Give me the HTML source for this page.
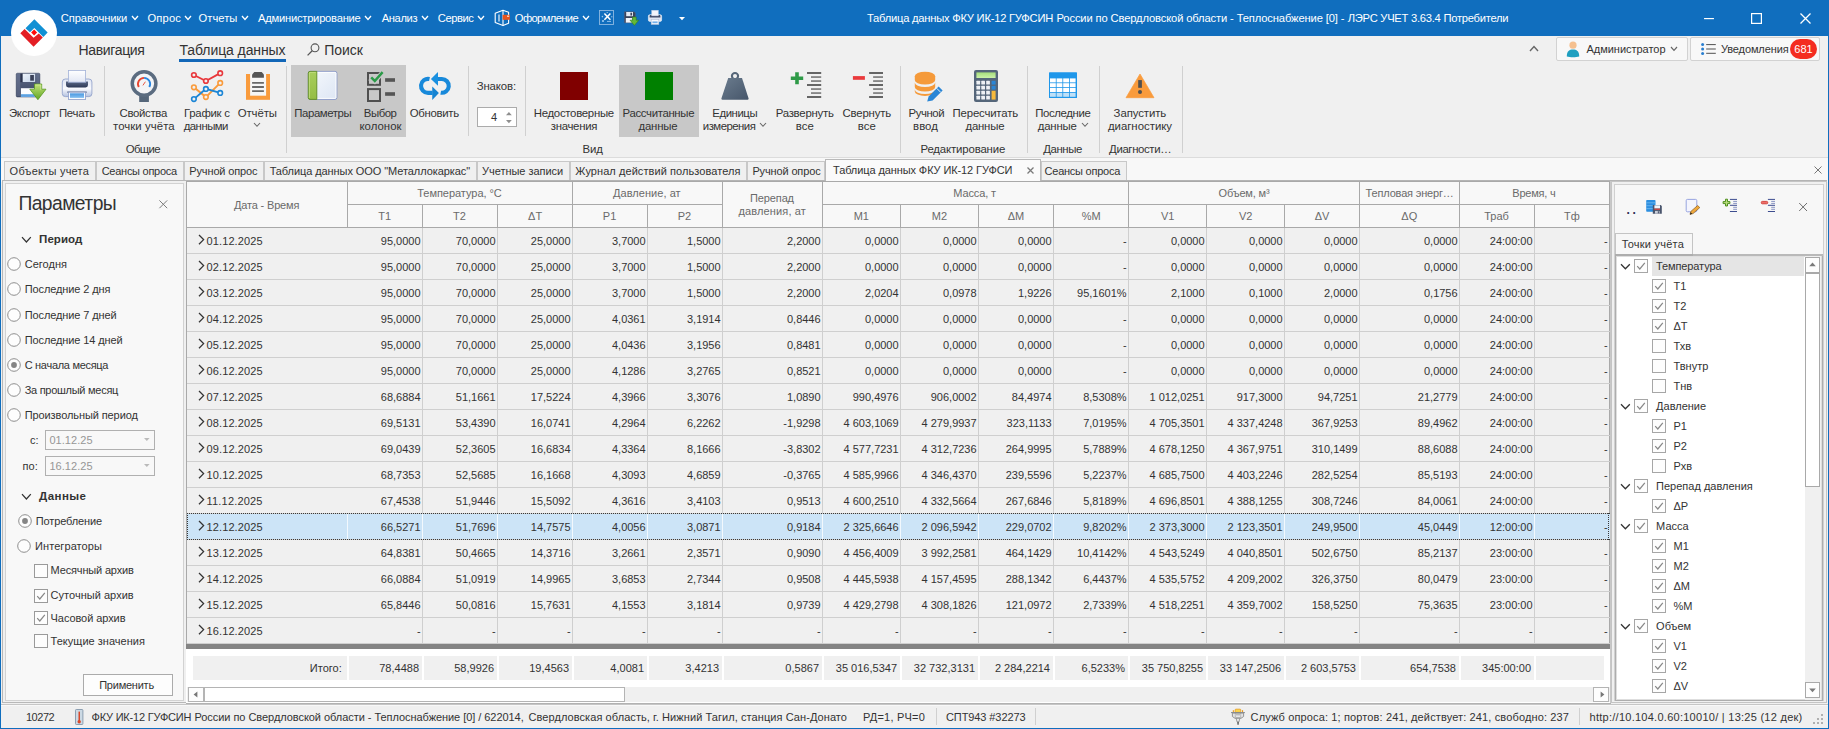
<!DOCTYPE html>
<html lang="ru"><head><meta charset="utf-8"><title>ЛЭРС УЧЕТ</title>
<style>
html,body{margin:0;padding:0;}
body{width:1829px;height:729px;overflow:hidden;position:relative;background:#f0f0f0;
font-family:"Liberation Sans",sans-serif;font-size:11px;color:#333;}
.b{position:absolute;box-sizing:border-box;}
.t{position:absolute;white-space:nowrap;line-height:16px;height:16px;}
svg{overflow:visible;}
</style></head><body>
<div class="b" style="left:0px;top:0px;width:1829px;height:729px;background:#f0f0f0;"></div>
<div class="b" style="left:0px;top:0px;width:1829px;height:36px;background:#106ebe;"></div>
<div class="b" style="left:1px;top:157px;width:1827px;height:25px;background:#f8f8f8;"></div>
<div class="b" style="left:1px;top:157px;width:1827px;height:1px;background:#dcdcdc;"></div>
<svg class="b" style="left:11px;top:10px;" width="46" height="46" viewBox="0 0 46 46"><circle cx="23" cy="23" r="23" fill="#fff"/>
<g transform="translate(23,23)">
<path d="M0.35,-13.7 L13.65,-0.47 L9.35,3.9 L0.35,-5.1 L-4.1,-0.63 L-8.5,-4.8 Z" fill="#1190d4"/>
<path d="M-9.4,-4.0 L-13.7,0.3 L-0.43,13.85 L8.8,4.46 L4.8,0.55 L-0.43,4.85 Z" fill="#e31e24"/>
<path d="M0.12,-3.45 L3.1,-0.47 L0.12,2.5 L-2.86,-0.47 Z" fill="#ff0a0a"/>
</g></svg>
<span class="t" style="left:60.80px;top:10.12px;font-size:11.2px;color:#fff;letter-spacing:-0.123px;">Справочники</span>
<svg class="b" style="left:130.5px;top:14.5px;" width="8" height="5.5" viewBox="0 0 8 5.5"><path d="M1,1 L4.0,4.5 L7,1" fill="none" stroke="#fff" stroke-width="1.3"/></svg>
<span class="t" style="left:147.50px;top:10.12px;font-size:11.2px;color:#fff;letter-spacing:0.133px;">Опрос</span>
<svg class="b" style="left:184px;top:14.5px;" width="8" height="5.5" viewBox="0 0 8 5.5"><path d="M1,1 L4.0,4.5 L7,1" fill="none" stroke="#fff" stroke-width="1.3"/></svg>
<span class="t" style="left:198.50px;top:10.12px;font-size:11.2px;color:#fff;letter-spacing:0.047px;">Отчеты</span>
<svg class="b" style="left:240.5px;top:14.5px;" width="8" height="5.5" viewBox="0 0 8 5.5"><path d="M1,1 L4.0,4.5 L7,1" fill="none" stroke="#fff" stroke-width="1.3"/></svg>
<span class="t" style="left:258.00px;top:10.12px;font-size:11.2px;color:#fff;letter-spacing:-0.242px;">Администрирование</span>
<svg class="b" style="left:364px;top:14.5px;" width="8" height="5.5" viewBox="0 0 8 5.5"><path d="M1,1 L4.0,4.5 L7,1" fill="none" stroke="#fff" stroke-width="1.3"/></svg>
<span class="t" style="left:381.70px;top:10.12px;font-size:11.2px;color:#fff;letter-spacing:-0.386px;">Анализ</span>
<svg class="b" style="left:420.5px;top:14.5px;" width="8" height="5.5" viewBox="0 0 8 5.5"><path d="M1,1 L4.0,4.5 L7,1" fill="none" stroke="#fff" stroke-width="1.3"/></svg>
<span class="t" style="left:437.80px;top:10.12px;font-size:11.2px;color:#fff;letter-spacing:-0.442px;">Сервис</span>
<svg class="b" style="left:476.8px;top:14.5px;" width="8" height="5.5" viewBox="0 0 8 5.5"><path d="M1,1 L4.0,4.5 L7,1" fill="none" stroke="#fff" stroke-width="1.3"/></svg>
<span class="t" style="left:514.80px;top:10.12px;font-size:11.2px;color:#fff;letter-spacing:-0.612px;">Оформление</span>
<svg class="b" style="left:582px;top:14.5px;" width="8" height="5.5" viewBox="0 0 8 5.5"><path d="M1,1 L4.0,4.5 L7,1" fill="none" stroke="#fff" stroke-width="1.3"/></svg>
<span class="t" style="left:867.00px;top:10.12px;font-size:11.2px;color:#fff;letter-spacing:-0.241px;">Таблица данных ФКУ ИК-12 ГУФСИН</span>
<span class="t" style="left:1056.50px;top:10.12px;font-size:11.2px;color:#fff;letter-spacing:-0.136px;">России по Свердловской области - Теплоснабжение [0] -</span>
<span class="t" style="left:1347.70px;top:10.12px;font-size:11.2px;color:#fff;letter-spacing:-0.258px;">ЛЭРС УЧЕТ 3.63.4 Потребители</span>
<svg class="b" style="left:494px;top:9px;" width="17" height="18" viewBox="0 0 17 18"><path d="M1.2,4.2 L9,1.2 L14.6,3.2 L14.6,14.2 L9,16.6 L1.2,13.6 Z" fill="none" stroke="#fff" stroke-width="1.1" stroke-linejoin="round"/>
<path d="M9,1.2 L9,16.6" stroke="#fff" stroke-width="1.1"/>
<path d="M5,5.4 L5,12.4" stroke="#fff" stroke-width="1.1"/>
<rect x="8.6" y="5.8" width="7.3" height="5" fill="#e8541c"/><rect x="13" y="6.6" width="2.2" height="1.2" fill="#ffe3d6"/></svg>
<svg class="b" style="left:599px;top:10px;" width="15" height="15" viewBox="0 0 15 15"><rect x="0.5" y="0.5" width="14" height="14" fill="none" stroke="#8db9e2" stroke-width="0.9"/>
<path d="M5.4,3.4 L11.4,9.8 M11.4,3.4 L5.4,9.8" stroke="#fff" stroke-width="1.5"/>
<circle cx="3.4" cy="6.6" r="0.8" fill="#9ccaf0"/><circle cx="4" cy="11" r="1.1" fill="#9ccaf0"/><path d="M8,11.4 h4" stroke="#9ccaf0" stroke-width="0.9"/><path d="M12.2,6.8 h1.2 M8.2,2 v1" stroke="#cfe3f5" stroke-width="0.8"/></svg>
<svg class="b" style="left:624px;top:11px;" width="16" height="15" viewBox="0 0 16 15"><path d="M0.4,0.8 h9.8 l1.2,1.2 v9.8 h-11 z" fill="#3a445c" stroke="#56627e" stroke-width="0.5"/>
<rect x="2.2" y="1" width="6.8" height="4.2" fill="#e4eaf4"/><rect x="6.4" y="1.7" width="1.7" height="2.8" fill="#3a445c"/>
<rect x="1.8" y="7" width="6.6" height="4.6" fill="#f1f4fa"/>
<path d="M8.6,6 h3.6 v3.2 h2.6 l-4.4,5.2 l-4.4,-5.2 h2.6 z" fill="#64b837" stroke="#2f7d1b" stroke-width="0.6" stroke-linejoin="round"/></svg>
<svg class="b" style="left:648px;top:10px;" width="14" height="15" viewBox="0 0 14 15"><rect x="0.4" y="4.8" width="13.2" height="6.6" rx="1.3" fill="#dfe5f2" stroke="#f4f6fb" stroke-width="0.6"/>
<path d="M1.6,7.4 v-1.4 a1,1 0 0 1 1,-1 h8.8 a1,1 0 0 1 1,1 v1.4 z" fill="#3f4a68"/>
<rect x="3.8" y="0.4" width="6.4" height="5.4" fill="#f3f5fc" stroke="#cfd7ea" stroke-width="0.6"/>
<rect x="3.2" y="9.4" width="7.6" height="5" fill="#f8f9fd" stroke="#b4c0da" stroke-width="0.6"/><rect x="4.4" y="11.4" width="5.2" height="1.8" fill="#74b0ea"/></svg>
<svg class="b" style="left:679px;top:17px;" width="7" height="4" viewBox="0 0 7 4"><path d="M0,0 h6 l-3,3.3 z" fill="#fff"/></svg>
<svg class="b" style="left:1704px;top:17.6px;" width="10" height="1.2" viewBox="0 0 10 1.2"><rect width="10" height="1.2" fill="#fff"/></svg>
<svg class="b" style="left:1751px;top:12.5px;" width="11" height="11" viewBox="0 0 11 11"><rect x="0.6" y="0.6" width="9.8" height="9.8" fill="none" stroke="#fff" stroke-width="1.2"/></svg>
<svg class="b" style="left:1800px;top:12.5px;" width="11" height="11" viewBox="0 0 11 11"><path d="M0.5,0.5 L10.5,10.5 M10.5,0.5 L0.5,10.5" stroke="#fff" stroke-width="1.3"/></svg>
<span class="t" style="left:78.50px;top:42.15px;font-size:14px;color:#333333;letter-spacing:-0.351px;">Навигация</span>
<span class="t" style="left:179.50px;top:42.15px;font-size:14px;color:#333333;letter-spacing:-0.090px;">Таблица данных</span>
<div class="b" style="left:179px;top:59px;width:107px;height:2.6px;background:#1267b8;"></div>
<svg class="b" style="left:306.5px;top:42.5px;" width="13" height="13" viewBox="0 0 13 13"><circle cx="8" cy="4.8" r="3.9" fill="none" stroke="#555" stroke-width="1.1"/><path d="M5.2,7.8 L0.6,12.4" stroke="#555" stroke-width="1.3"/></svg>
<span class="t" style="left:324.20px;top:42.15px;font-size:14px;color:#333333;letter-spacing:-0.019px;">Поиск</span>
<svg class="b" style="left:1529px;top:45px;" width="10" height="7" viewBox="0 0 10 7"><path d="M1,6 L5,1.6 L9,6" fill="none" stroke="#666" stroke-width="1.4"/></svg>
<div class="b" style="left:1556px;top:37px;width:132px;height:24px;background:#f8f8f8;border:1px solid #d2d2d2;border-radius:2px;"></div>
<svg class="b" style="left:1566px;top:41px;" width="14" height="16" viewBox="0 0 14 16"><circle cx="7" cy="4.2" r="3.6" fill="#f5c08f"/><path d="M0.8,15.5 C0.8,10 3.5,8.6 7,8.6 C10.5,8.6 13.2,10 13.2,15.5 C10,16.6 4,16.6 0.8,15.5 Z" fill="#1e9fc0"/></svg>
<span class="t" style="left:1586.50px;top:41.19px;font-size:11px;color:#333333;letter-spacing:-0.028px;">Администратор</span>
<svg class="b" style="left:1669.5px;top:46px;" width="8" height="5.3" viewBox="0 0 8 5.3"><path d="M1,1 L4.0,4.3 L7,1" fill="none" stroke="#666" stroke-width="1.2"/></svg>
<div class="b" style="left:1690px;top:37px;width:130px;height:24px;background:#f8f8f8;border:1px solid #d2d2d2;border-radius:2px;"></div>
<svg class="b" style="left:1700.5px;top:43px;" width="16" height="12" viewBox="0 0 16 12"><circle cx="1.6" cy="1.6" r="1.5" fill="#2a7fd0"/><circle cx="1.6" cy="6" r="1.5" fill="#2a7fd0"/><circle cx="1.6" cy="10.4" r="1.5" fill="#2a7fd0"/>
<path d="M5.2,1.6 h9.6 M5.2,6 h9.6 M5.2,10.3 h9.6" stroke="#505050" stroke-width="1"/></svg>
<span class="t" style="left:1721.00px;top:41.19px;font-size:11px;color:#333333;letter-spacing:-0.116px;">Уведомления</span>
<div class="b" style="left:1790px;top:39px;width:27px;height:20.4px;background:#f42c20;border-radius:10.2px;"></div>
<span class="t" style="left:1794.32px;top:41.19px;font-size:11px;color:#fff;">681</span>
<div class="b" style="left:104px;top:66px;width:1px;height:70px;background:#d0d0d0;"></div>
<div class="b" style="left:286px;top:66px;width:1px;height:87px;background:#d0d0d0;"></div>
<div class="b" style="left:468px;top:66px;width:1px;height:70px;background:#d0d0d0;"></div>
<div class="b" style="left:525px;top:66px;width:1px;height:70px;background:#d0d0d0;"></div>
<div class="b" style="left:900px;top:66px;width:1px;height:87px;background:#d0d0d0;"></div>
<div class="b" style="left:1027px;top:66px;width:1px;height:87px;background:#d0d0d0;"></div>
<div class="b" style="left:1099px;top:66px;width:1px;height:87px;background:#d0d0d0;"></div>
<div class="b" style="left:1182px;top:66px;width:1px;height:87px;background:#d0d0d0;"></div>
<div class="b" style="left:291px;top:65px;width:115px;height:72px;background:#c8c8c8;"></div>
<div class="b" style="left:619px;top:65px;width:80px;height:72px;background:#c8c8c8;"></div>
<span class="t" style="left:8.90px;top:105.05px;font-size:11.4px;color:#333333;letter-spacing:-0.248px;">Экспорт</span>
<span class="t" style="left:58.90px;top:105.05px;font-size:11.4px;color:#333333;letter-spacing:-0.208px;">Печать</span>
<span class="t" style="left:119.50px;top:105.05px;font-size:11.4px;color:#333333;letter-spacing:-0.320px;">Свойства</span>
<span class="t" style="left:113.00px;top:117.85px;font-size:11.4px;color:#333333;letter-spacing:0.067px;">точки учёта</span>
<span class="t" style="left:184.00px;top:105.05px;font-size:11.4px;color:#333333;letter-spacing:-0.265px;">График с</span>
<span class="t" style="left:183.70px;top:117.85px;font-size:11.4px;color:#333333;letter-spacing:-0.526px;">данными</span>
<span class="t" style="left:237.70px;top:105.05px;font-size:11.4px;color:#333333;letter-spacing:-0.081px;">Отчёты</span>
<svg class="b" style="left:253px;top:121.6px;" width="8" height="5.3" viewBox="0 0 8 5.3"><path d="M1,1 L4.0,4.3 L7,1" fill="none" stroke="#666" stroke-width="1.1"/></svg>
<span class="t" style="left:125.70px;top:140.85px;font-size:11.4px;color:#333333;letter-spacing:-0.637px;">Общие</span>
<span class="t" style="left:294.30px;top:105.05px;font-size:11.4px;color:#333333;letter-spacing:-0.419px;">Параметры</span>
<span class="t" style="left:363.80px;top:105.05px;font-size:11.4px;color:#333333;letter-spacing:-0.462px;">Выбор</span>
<span class="t" style="left:359.40px;top:117.85px;font-size:11.4px;color:#333333;letter-spacing:0.036px;">колонок</span>
<span class="t" style="left:409.70px;top:105.05px;font-size:11.4px;color:#333333;letter-spacing:-0.302px;">Обновить</span>
<span class="t" style="left:476.70px;top:78.05px;font-size:11.4px;color:#333333;letter-spacing:-0.129px;">Знаков:</span>
<div class="b" style="left:477px;top:107px;width:40px;height:20px;background:#fff;border:1px solid #ababab;"></div>
<span class="t" style="left:491.00px;top:108.89px;font-size:11px;color:#333333;">4</span>
<svg class="b" style="left:505.8px;top:111.6px;" width="6" height="4" viewBox="0 0 6 4"><path d="M0,3.2 L2.9,0 L5.8,3.2 Z" fill="#8e8e8e"/></svg>
<svg class="b" style="left:505.8px;top:119.6px;" width="6" height="4" viewBox="0 0 6 4"><path d="M0,0 L2.9,3.2 L5.8,0 Z" fill="#8e8e8e"/></svg>
<span class="t" style="left:533.70px;top:105.05px;font-size:11.4px;color:#333333;letter-spacing:-0.276px;">Недостоверные</span>
<span class="t" style="left:550.70px;top:117.85px;font-size:11.4px;color:#333333;letter-spacing:-0.279px;">значения</span>
<span class="t" style="left:622.60px;top:105.05px;font-size:11.4px;color:#333333;letter-spacing:-0.342px;">Рассчитанные</span>
<span class="t" style="left:638.60px;top:117.85px;font-size:11.4px;color:#333333;letter-spacing:-0.236px;">данные</span>
<span class="t" style="left:712.30px;top:105.05px;font-size:11.4px;color:#333333;letter-spacing:-0.444px;">Единицы</span>
<span class="t" style="left:702.80px;top:117.85px;font-size:11.4px;color:#333333;letter-spacing:-0.521px;">измерения</span>
<svg class="b" style="left:759px;top:121.6px;" width="8" height="5.3" viewBox="0 0 8 5.3"><path d="M1,1 L4.0,4.3 L7,1" fill="none" stroke="#666" stroke-width="1.1"/></svg>
<span class="t" style="left:775.70px;top:105.05px;font-size:11.4px;color:#333333;letter-spacing:-0.243px;">Развернуть</span>
<span class="t" style="left:795.87px;top:117.85px;font-size:11.4px;color:#333333;">все</span>
<span class="t" style="left:842.60px;top:105.05px;font-size:11.4px;color:#333333;letter-spacing:-0.200px;">Свернуть</span>
<span class="t" style="left:857.82px;top:117.85px;font-size:11.4px;color:#333333;">все</span>
<span class="t" style="left:582.39px;top:140.85px;font-size:11.4px;color:#333333;">Вид</span>
<span class="t" style="left:908.60px;top:105.05px;font-size:11.4px;color:#333333;letter-spacing:-0.441px;">Ручной</span>
<span class="t" style="left:913.09px;top:117.85px;font-size:11.4px;color:#333333;">ввод</span>
<span class="t" style="left:952.60px;top:105.05px;font-size:11.4px;color:#333333;letter-spacing:-0.186px;">Пересчитать</span>
<span class="t" style="left:965.50px;top:117.85px;font-size:11.4px;color:#333333;letter-spacing:-0.220px;">данные</span>
<span class="t" style="left:920.50px;top:140.85px;font-size:11.4px;color:#333333;letter-spacing:-0.153px;">Редактирование</span>
<span class="t" style="left:1035.30px;top:105.05px;font-size:11.4px;color:#333333;letter-spacing:-0.393px;">Последние</span>
<span class="t" style="left:1037.80px;top:117.85px;font-size:11.4px;color:#333333;letter-spacing:-0.203px;">данные</span>
<svg class="b" style="left:1080.5px;top:121.6px;" width="8" height="5.3" viewBox="0 0 8 5.3"><path d="M1,1 L4.0,4.3 L7,1" fill="none" stroke="#666" stroke-width="1.1"/></svg>
<span class="t" style="left:1043.20px;top:140.85px;font-size:11.4px;color:#333333;letter-spacing:-0.398px;">Данные</span>
<span class="t" style="left:1113.60px;top:105.05px;font-size:11.4px;color:#333333;letter-spacing:-0.091px;">Запустить</span>
<span class="t" style="left:1107.90px;top:117.85px;font-size:11.4px;color:#333333;letter-spacing:-0.006px;">диагностику</span>
<span class="t" style="left:1109.10px;top:140.85px;font-size:11.4px;color:#333333;letter-spacing:-0.381px;">Диагности…</span>
<div class="b" style="left:560px;top:72px;width:28px;height:28px;background:#800000;"></div>
<div class="b" style="left:645px;top:72px;width:28px;height:28px;background:#008000;"></div>
<svg class="b" style="left:0;top:0" width="1829" height="160" viewBox="0 0 1829 160"><defs>
<linearGradient id="gNavy" x1="0" y1="0" x2="0" y2="1"><stop offset="0" stop-color="#5c6a88"/><stop offset="1" stop-color="#2e3956"/></linearGradient>
<linearGradient id="gGreen" x1="0" y1="0" x2="0" y2="1"><stop offset="0" stop-color="#c2e276"/><stop offset="1" stop-color="#62a626"/></linearGradient>
<linearGradient id="gPrn" x1="0" y1="0" x2="0" y2="1"><stop offset="0" stop-color="#dfe5f3"/><stop offset="0.55" stop-color="#f8f9fd"/><stop offset="1" stop-color="#b4c2e0"/></linearGradient>
<linearGradient id="gSlate" x1="0" y1="0" x2="1" y2="1"><stop offset="0" stop-color="#6b7c8e"/><stop offset="1" stop-color="#46566a"/></linearGradient>
<linearGradient id="gPar" x1="0" y1="0" x2="1" y2="1"><stop offset="0" stop-color="#f6f9fd"/><stop offset="1" stop-color="#dde6f4"/></linearGradient>
<linearGradient id="gParG" x1="0" y1="0" x2="0" y2="1"><stop offset="0" stop-color="#a8ce5c"/><stop offset="1" stop-color="#94bd44"/></linearGradient>
<linearGradient id="gScr" x1="0" y1="0" x2="0" y2="1"><stop offset="0" stop-color="#a6de7c"/><stop offset="1" stop-color="#caf2a8"/></linearGradient>
<linearGradient id="gFl" x1="0" y1="0" x2="0" y2="1"><stop offset="0" stop-color="#5d6985"/><stop offset="1" stop-color="#3a4561"/></linearGradient>
<linearGradient id="gShut" x1="0" y1="0" x2="1" y2="1"><stop offset="0" stop-color="#eef4fb"/><stop offset="1" stop-color="#c3d2e6"/></linearGradient>
<linearGradient id="gBlu" x1="0" y1="0" x2="0" y2="1"><stop offset="0" stop-color="#86beee"/><stop offset="1" stop-color="#3a88d6"/></linearGradient>
<linearGradient id="gBlu2" x1="0" y1="0" x2="0" y2="1"><stop offset="0" stop-color="#4a98e0"/><stop offset="1" stop-color="#86c0f0"/></linearGradient>
<linearGradient id="gPap" x1="0" y1="0" x2="0" y2="1"><stop offset="0" stop-color="#ffffff"/><stop offset="1" stop-color="#e2e7f4"/></linearGradient>
</defs><g>
<rect x="16.2" y="73.2" width="23.7" height="23.8" rx="1.2" fill="url(#gFl)" stroke="#39425c" stroke-width="0.5"/>
<rect x="16.8" y="73.8" width="3.4" height="22.6" fill="#6b7794" opacity="0.55"/><rect x="36.4" y="73.8" width="3" height="12" fill="#6b7794" opacity="0.45"/>
<rect x="20.4" y="73.6" width="2.4" height="8.6" fill="#2b334c"/>
<rect x="22.7" y="73.8" width="12.4" height="8.2" fill="url(#gShut)"/><rect x="30.2" y="75" width="3.7" height="5.7" fill="#3a4158"/>
<rect x="20.9" y="88.2" width="13.9" height="8.8" fill="#fbfcff"/><rect x="20.9" y="94" width="13.9" height="2.8" fill="url(#gBlu)"/>
<path d="M34.5,84 h7.2 v5.2 h4.3 l-8.1,10.5 l-8.1,-10.5 h4.7 z" fill="url(#gGreen)" stroke="#5a9a22" stroke-width="0.8" stroke-linejoin="round"/>
<path d="M35.4,84.9 h5.4 v5.2" fill="none" stroke="#e2f3b4" stroke-width="0.7" opacity="0.8"/>
</g><g>
<rect x="62.3" y="79" width="29.6" height="17.6" rx="3" fill="url(#gPrn)" stroke="#8a9cc8" stroke-width="0.8"/>
<path d="M66,81.4 h22 v3.6 a2.4,2.4 0 0 1 -2.4,2.4 h-17.2 a2.4,2.4 0 0 1 -2.4,-2.4 z" fill="url(#gNavy)"/>
<rect x="68.4" y="70.4" width="17.2" height="11.8" fill="url(#gPap)" stroke="#a3b2d8" stroke-width="0.8"/>
<rect x="67.2" y="91.6" width="19.6" height="1" fill="#4a5878"/>
<rect x="68.4" y="92.2" width="17.2" height="7.3" fill="#fbfcff" stroke="#8a9cc8" stroke-width="0.8"/>
<rect x="70" y="93.3" width="14" height="4.6" fill="url(#gBlu2)"/>
</g><g>
<rect x="139.2" y="95" width="9.7" height="7" fill="#55667a"/>
<circle cx="144.06" cy="83.5" r="11.8" fill="#f3f4f6" stroke="#5b6c80" stroke-width="3.5"/>
<path d="M138.82,86.93 A6.05,6.05 0 0 1 144.06,77.85" fill="none" stroke="#e8452f" stroke-width="1.9"/>
<path d="M144.06,77.85 A6.05,6.05 0 0 1 149.3,86.93" fill="none" stroke="#2a86e0" stroke-width="1.9"/>
<path d="M142.9,85.4 L145.4,81.7" stroke="#e8452f" stroke-width="0.9"/>
</g><path d="M193.9,75 L205.9,81 L220.2,73.2" fill="none" stroke="#e8383c" stroke-width="1.9"/><circle cx="193.9" cy="75" r="2.3" fill="#f0f0f0" stroke="#e8383c" stroke-width="1.6"/><circle cx="205.9" cy="81" r="2.3" fill="#f0f0f0" stroke="#e8383c" stroke-width="1.6"/><circle cx="220.2" cy="73.2" r="2.3" fill="#f0f0f0" stroke="#e8383c" stroke-width="1.6"/><path d="M193.9,87.3 L205.9,97.1 L220.2,82.9" fill="none" stroke="#f99b3c" stroke-width="1.9"/><circle cx="193.9" cy="87.3" r="2.3" fill="#f0f0f0" stroke="#f99b3c" stroke-width="1.6"/><circle cx="205.9" cy="97.1" r="2.3" fill="#f0f0f0" stroke="#f99b3c" stroke-width="1.6"/><circle cx="220.2" cy="82.9" r="2.3" fill="#f0f0f0" stroke="#f99b3c" stroke-width="1.6"/><path d="M193.9,99.1 L205.9,88.9 L220.2,92.9" fill="none" stroke="#1c86d6" stroke-width="1.9"/><circle cx="193.9" cy="99.1" r="2.3" fill="#f0f0f0" stroke="#1c86d6" stroke-width="1.6"/><circle cx="205.9" cy="88.9" r="2.3" fill="#f0f0f0" stroke="#1c86d6" stroke-width="1.6"/><circle cx="220.2" cy="92.9" r="2.3" fill="#f0f0f0" stroke="#1c86d6" stroke-width="1.6"/><g>
<rect x="246" y="74" width="24" height="25.8" fill="#f99b3c"/>
<rect x="250.1" y="74" width="16" height="21.7" fill="#f6f6f6"/>
<path d="M252.1,77.8 v-3.4 l2.2,-2.3 h7.4 l2.2,2.3 v3.4 z" fill="#555"/>
<path d="M252.1,82.9 h11.8 M252.1,87 h11.8 M252.1,91.1 h11.8" stroke="#6a6a6a" stroke-width="1.8"/>
</g><g>
<rect x="308.3" y="71.4" width="28.6" height="28" rx="1.8" fill="url(#gPar)" stroke="#8595c6" stroke-width="0.9"/>
<rect x="309.3" y="72.4" width="26.6" height="26" rx="1" fill="none" stroke="#ffffff" stroke-width="0.9"/>
<path d="M310,71.4 h6.8 v28 h-6.8 a1.7,1.7 0 0 1 -1.7,-1.7 v-24.6 a1.7,1.7 0 0 1 1.7,-1.7 z" fill="url(#gParG)" stroke="#5f8a22" stroke-width="0.9"/>
<path d="M309.4,98 v-25 a0.6,0.6 0 0 1 0.6,-0.6 h5.8" fill="none" stroke="#c4e084" stroke-width="0.8"/>
</g><g fill="none" stroke="#4f4f4f" stroke-width="2">
<rect x="368" y="73" width="12" height="11.8"/><rect x="368" y="89.1" width="12" height="11.9"/>
</g>
<rect x="385.1" y="78.2" width="9.9" height="3.6" fill="#555"/><rect x="385.1" y="92.2" width="9.9" height="3.6" fill="#555"/>
<path d="M369.6,78.2 L374.6,81.4 L383.4,71.4" fill="none" stroke="#c8c8c8" stroke-width="4.6"/>
<path d="M371.2,77.4 L374.8,81 L382.6,72.2" fill="none" stroke="#2a9a47" stroke-width="2.5"/><g fill="none" stroke="#1889da" stroke-width="4.1">
<path d="M429.5,79 A7,7 0 1 0 428.06,92.84 L432.6,92.84"/>
<path d="M437.7,79 L441.9,79 A6.9,6.9 0 1 1 440.7,92.7"/>
</g>
<path d="M432.27,86.4 L438.9,93.1 L432.27,100 Z" fill="#1684d2"/>
<path d="M437.98,72 L430.9,78.9 L437.98,85.84 Z" fill="#1a90e0"/><g>
<circle cx="735" cy="76.1" r="3.1" fill="none" stroke="#566678" stroke-width="2.1"/>
<path d="M728.2,78 h13.8 l6.6,20.6 q0.3,1.1 -0.9,1.1 h-25.4 q-1.2,0 -0.9,-1.1 z" fill="url(#gSlate)"/>
</g><rect x="807" y="72.2" width="14.200000000000045" height="1.6" fill="#444"/><rect x="811" y="76.3" width="10.200000000000045" height="1.5" fill="#6e6e6e"/><rect x="811" y="80.3" width="10.200000000000045" height="1.5" fill="#6e6e6e"/><rect x="807" y="84.2" width="14.200000000000045" height="1.6" fill="#444"/><rect x="811" y="88.3" width="10.200000000000045" height="1.5" fill="#6e6e6e"/><rect x="811" y="92.3" width="10.200000000000045" height="1.5" fill="#6e6e6e"/><rect x="807" y="96.2" width="14.200000000000045" height="1.6" fill="#444"/><path d="M795.2,72.2 h3.6 v4.2 h4.4 v3.6 h-4.4 v4.2 h-3.6 v-4.2 h-4.4 v-3.6 h4.4 z" fill="#2e9a47"/><rect x="869.1" y="72.2" width="13.899999999999977" height="1.6" fill="#444"/><rect x="873.1" y="76.3" width="9.899999999999977" height="1.5" fill="#6e6e6e"/><rect x="873.1" y="80.3" width="9.899999999999977" height="1.5" fill="#6e6e6e"/><rect x="869.1" y="84.2" width="13.899999999999977" height="1.6" fill="#444"/><rect x="873.1" y="88.3" width="9.899999999999977" height="1.5" fill="#6e6e6e"/><rect x="873.1" y="92.3" width="9.899999999999977" height="1.5" fill="#6e6e6e"/><rect x="869.1" y="96.2" width="13.899999999999977" height="1.6" fill="#444"/><rect x="852.9" y="76.1" width="12" height="3.7" fill="#ea3a3c"/><g fill="#f59a3a">
<path d="M914.8,76.2 a10.2,4.5 0 0 1 20.4,0 v3.8 a10.2,4.5 0 0 1 -20.4,0 z"/>
<path d="M914.8,82.6 a10.2,4.5 0 0 0 20.4,0 v4.4 a10.2,4.5 0 0 1 -20.4,0 z"/>
<path d="M914.8,89.6 a10.2,4.5 0 0 0 20.4,0 v1.8 a10.2,4.5 0 0 1 -20.4,0 z"/>
</g>
<path d="M927.2,101.6 L928.6,96.4 L938.6,86.4 L942.6,90.4 L932.6,100.4 Z" fill="#2a86d6"/>
<path d="M936.7,88.3 L940.7,92.3" stroke="#f0f0f0" stroke-width="1"/><rect x="974" y="70" width="24" height="32" rx="2" fill="#55667a"/><rect x="976.4" y="72.4" width="19.2" height="5.6" fill="url(#gScr)"/><rect x="976.4" y="80.8" width="3.7" height="3.8" rx="0.5" fill="#eef1f5"/><rect x="981.3" y="80.8" width="3.7" height="3.8" rx="0.5" fill="#eef1f5"/><rect x="986.2" y="80.8" width="3.7" height="3.8" rx="0.5" fill="#eef1f5"/><rect x="976.4" y="85.8" width="3.7" height="3.8" rx="0.5" fill="#eef1f5"/><rect x="981.3" y="85.8" width="3.7" height="3.8" rx="0.5" fill="#eef1f5"/><rect x="986.2" y="85.8" width="3.7" height="3.8" rx="0.5" fill="#eef1f5"/><rect x="976.4" y="90.8" width="3.7" height="3.8" rx="0.5" fill="#eef1f5"/><rect x="981.3" y="90.8" width="3.7" height="3.8" rx="0.5" fill="#eef1f5"/><rect x="986.2" y="90.8" width="3.7" height="3.8" rx="0.5" fill="#eef1f5"/><rect x="976.4" y="95.8" width="3.7" height="3.8" rx="0.5" fill="#eef1f5"/><rect x="981.3" y="95.8" width="3.7" height="3.8" rx="0.5" fill="#eef1f5"/><rect x="986.2" y="95.8" width="3.7" height="3.8" rx="0.5" fill="#eef1f5"/><rect x="991.6" y="80.8" width="4" height="3.8" fill="#2a86d6"/><rect x="991.6" y="85.8" width="4" height="3.8" fill="#2a86d6"/><rect x="991.6" y="90.8" width="4" height="8.8" fill="#f6b93b"/><rect x="1049" y="72.2" width="28" height="25.8" rx="0.6" fill="#1f97ea"/><rect x="1050.0" y="78.4" width="5.8" height="4" fill="#ffffff"/><rect x="1056.6" y="78.4" width="5.8" height="4" fill="#ffffff"/><rect x="1063.2" y="78.4" width="5.8" height="4" fill="#ffffff"/><rect x="1069.8" y="78.4" width="5.8" height="4" fill="#ffffff"/><rect x="1050.0" y="83.2" width="5.8" height="4" fill="#ffffff"/><rect x="1056.6" y="83.2" width="5.8" height="4" fill="#ffffff"/><rect x="1063.2" y="83.2" width="5.8" height="4" fill="#ffffff"/><rect x="1069.8" y="83.2" width="5.8" height="4" fill="#ffffff"/><rect x="1050.0" y="88.0" width="5.8" height="4" fill="#ffffff"/><rect x="1056.6" y="88.0" width="5.8" height="4" fill="#ffffff"/><rect x="1063.2" y="88.0" width="5.8" height="4" fill="#ffffff"/><rect x="1069.8" y="88.0" width="5.8" height="4" fill="#ffffff"/><rect x="1050.0" y="92.8" width="5.8" height="4" fill="#bfe0f7"/><rect x="1056.6" y="92.8" width="5.8" height="4" fill="#bfe0f7"/><rect x="1063.2" y="92.8" width="5.8" height="4" fill="#bfe0f7"/><rect x="1069.8" y="92.8" width="5.8" height="4" fill="#bfe0f7"/><path d="M1140,74 L1154,97.7 L1126,97.7 Z" fill="#f99b3c" stroke="#f99b3c" stroke-width="0.7" stroke-linejoin="round"/>
<rect x="1138.2" y="80.1" width="3.7" height="7.7" fill="#505050"/><circle cx="1140" cy="92.1" r="2" fill="#505050"/></svg>
<div class="b" style="left:4px;top:161px;width:92px;height:20px;background:#f0f0f0;border:1px solid #c8c8c8;border-bottom:none;"></div>
<span class="t" style="left:9.60px;top:163.19px;font-size:11px;color:#333333;letter-spacing:0.236px;">Объекты учета</span>
<div class="b" style="left:96px;top:161px;width:88px;height:20px;background:#f0f0f0;border:1px solid #c8c8c8;border-bottom:none;"></div>
<span class="t" style="left:101.70px;top:163.19px;font-size:11px;color:#333333;letter-spacing:-0.265px;">Сеансы опроса</span>
<div class="b" style="left:184px;top:161px;width:80px;height:20px;background:#f0f0f0;border:1px solid #c8c8c8;border-bottom:none;"></div>
<span class="t" style="left:189.30px;top:163.19px;font-size:11px;color:#333333;letter-spacing:-0.139px;">Ручной опрос</span>
<div class="b" style="left:264px;top:161px;width:213px;height:20px;background:#f0f0f0;border:1px solid #c8c8c8;border-bottom:none;"></div>
<span class="t" style="left:269.70px;top:163.19px;font-size:11px;color:#333333;letter-spacing:-0.079px;">Таблица данных ООО &quot;Металлокаркас&quot;</span>
<div class="b" style="left:477px;top:161px;width:93px;height:20px;background:#f0f0f0;border:1px solid #c8c8c8;border-bottom:none;"></div>
<span class="t" style="left:482.00px;top:163.19px;font-size:11px;color:#333333;letter-spacing:-0.026px;">Учетные записи</span>
<div class="b" style="left:570px;top:161px;width:177px;height:20px;background:#f0f0f0;border:1px solid #c8c8c8;border-bottom:none;"></div>
<span class="t" style="left:575.30px;top:163.19px;font-size:11px;color:#333333;letter-spacing:0.069px;">Журнал действий пользователя</span>
<div class="b" style="left:747px;top:161px;width:78px;height:20px;background:#f0f0f0;border:1px solid #c8c8c8;border-bottom:none;"></div>
<span class="t" style="left:752.40px;top:163.19px;font-size:11px;color:#333333;letter-spacing:-0.139px;">Ручной опрос</span>
<div class="b" style="left:1041px;top:161px;width:86px;height:20px;background:#f0f0f0;border:1px solid #c8c8c8;border-bottom:none;"></div>
<span class="t" style="left:1044.60px;top:163.19px;font-size:11px;color:#333333;letter-spacing:-0.249px;">Сеансы опроса</span>
<div class="b" style="left:2px;top:180px;width:1825px;height:1px;background:#b4b4b4;"></div>
<div class="b" style="left:825px;top:159px;width:216px;height:22px;background:#fafafa;border:1px solid #b9b9b9;border-bottom:none;"></div>
<span class="t" style="left:833.00px;top:162.19px;font-size:11px;color:#333333;letter-spacing:-0.098px;">Таблица данных ФКУ ИК-12 ГУФСИ</span>
<svg class="b" style="left:1026.5px;top:167px;" width="7" height="7" viewBox="0 0 7 7"><path d="M0.5,0.5 L6.5,6.5 M6.5,0.5 L0.5,6.5" stroke="#7a7a7a" stroke-width="1.25"/></svg>
<svg class="b" style="left:1813.5px;top:165.5px;" width="8" height="8" viewBox="0 0 8 8"><path d="M0.5,0.5 L7.5,7.5 M7.5,0.5 L0.5,7.5" stroke="#777" stroke-width="1"/></svg>
<div class="b" style="left:2px;top:180px;width:185px;height:523px;background:#f0f0f0;border:1px solid #b8b8b8;"></div>
<div class="b" style="left:5px;top:183px;width:179px;height:518px;background:#f8f8f8;border:1px solid #d2d2d2;"></div>
<span class="t" style="left:18.40px;top:196.31px;font-size:19.3px;color:#333333;letter-spacing:-0.565px;">Параметры</span>
<svg class="b" style="left:158.8px;top:199.8px;" width="9" height="9" viewBox="0 0 9 9"><path d="M0.4,0.4 L8.2,8.2 M8.2,0.4 L0.4,8.2" stroke="#7c7c7c" stroke-width="1"/></svg>
<svg class="b" style="left:21px;top:235.5px;" width="11" height="8" viewBox="0 0 11 8"><path d="M1,1.2 L5.4,6 L9.8,1.2" fill="none" stroke="#333" stroke-width="1.25"/></svg>
<span class="t" style="left:39.10px;top:230.72px;font-size:11.5px;color:#333333;letter-spacing:0.045px;font-weight:bold;">Период</span>
<svg class="b" style="left:7px;top:257.0px;" width="14" height="14" viewBox="0 0 14 14"><circle cx="7" cy="7" r="6.3" fill="#fdfdfd" stroke="#8f8f8f" stroke-width="1"/></svg>
<span class="t" style="left:24.70px;top:255.79px;font-size:11px;color:#333333;letter-spacing:0.035px;">Сегодня</span>
<svg class="b" style="left:7px;top:282.0px;" width="14" height="14" viewBox="0 0 14 14"><circle cx="7" cy="7" r="6.3" fill="#fdfdfd" stroke="#8f8f8f" stroke-width="1"/></svg>
<span class="t" style="left:24.70px;top:280.79px;font-size:11px;color:#333333;letter-spacing:-0.110px;">Последние 2 дня</span>
<svg class="b" style="left:7px;top:308.1px;" width="14" height="14" viewBox="0 0 14 14"><circle cx="7" cy="7" r="6.3" fill="#fdfdfd" stroke="#8f8f8f" stroke-width="1"/></svg>
<span class="t" style="left:24.70px;top:306.69px;font-size:11px;color:#333333;letter-spacing:-0.110px;">Последние 7 дней</span>
<svg class="b" style="left:7px;top:333.0px;" width="14" height="14" viewBox="0 0 14 14"><circle cx="7" cy="7" r="6.3" fill="#fdfdfd" stroke="#8f8f8f" stroke-width="1"/></svg>
<span class="t" style="left:24.70px;top:331.89px;font-size:11px;color:#333333;letter-spacing:-0.105px;">Последние 14 дней</span>
<svg class="b" style="left:7px;top:358.2px;" width="14" height="14" viewBox="0 0 14 14"><circle cx="7" cy="7" r="6.3" fill="#fdfdfd" stroke="#8f8f8f" stroke-width="1"/><circle cx="7" cy="7" r="2.9" fill="#858585"/></svg>
<span class="t" style="left:24.70px;top:356.79px;font-size:11px;color:#333333;letter-spacing:-0.296px;">С начала месяца</span>
<svg class="b" style="left:7px;top:383.0px;" width="14" height="14" viewBox="0 0 14 14"><circle cx="7" cy="7" r="6.3" fill="#fdfdfd" stroke="#8f8f8f" stroke-width="1"/></svg>
<span class="t" style="left:24.70px;top:381.69px;font-size:11px;color:#333333;letter-spacing:-0.275px;">За прошлый месяц</span>
<svg class="b" style="left:7px;top:407.9px;" width="14" height="14" viewBox="0 0 14 14"><circle cx="7" cy="7" r="6.3" fill="#fdfdfd" stroke="#8f8f8f" stroke-width="1"/></svg>
<span class="t" style="left:24.70px;top:406.89px;font-size:11px;color:#333333;letter-spacing:-0.094px;">Произвольный период</span>
<span class="t" style="left:30.00px;top:431.79px;font-size:11px;color:#333333;">с:</span>
<div class="b" style="left:45px;top:430px;width:110px;height:20px;background:#f8f8f8;border:1px solid #b0b0b0;"></div>
<span class="t" style="left:49.40px;top:431.79px;font-size:11px;color:#969696;letter-spacing:0.048px;">01.12.25</span>
<svg class="b" style="left:144px;top:438.4px;" width="6" height="4" viewBox="0 0 6 4"><path d="M0,0 h5.6 l-2.8,3 z" fill="#bababa"/></svg>
<span class="t" style="left:22.60px;top:457.79px;font-size:11px;color:#333333;">по:</span>
<div class="b" style="left:45px;top:456px;width:110px;height:20px;background:#f8f8f8;border:1px solid #b0b0b0;"></div>
<span class="t" style="left:49.40px;top:457.79px;font-size:11px;color:#969696;letter-spacing:0.048px;">16.12.25</span>
<svg class="b" style="left:144px;top:464.4px;" width="6" height="4" viewBox="0 0 6 4"><path d="M0,0 h5.6 l-2.8,3 z" fill="#bababa"/></svg>
<svg class="b" style="left:21px;top:492.5px;" width="11" height="8" viewBox="0 0 11 8"><path d="M1,1.2 L5.4,6 L9.8,1.2" fill="none" stroke="#333" stroke-width="1.25"/></svg>
<span class="t" style="left:39.10px;top:487.82px;font-size:11.5px;color:#333333;letter-spacing:0.434px;font-weight:bold;">Данные</span>
<svg class="b" style="left:18px;top:513.9px;" width="14" height="14" viewBox="0 0 14 14"><circle cx="7" cy="7" r="6.3" fill="#fdfdfd" stroke="#8f8f8f" stroke-width="1"/><circle cx="7" cy="7" r="2.9" fill="#858585"/></svg>
<span class="t" style="left:35.80px;top:513.19px;font-size:11px;color:#333333;letter-spacing:-0.128px;">Потребление</span>
<svg class="b" style="left:17px;top:538.6999999999999px;" width="14" height="14" viewBox="0 0 14 14"><circle cx="7" cy="7" r="6.3" fill="#fdfdfd" stroke="#8f8f8f" stroke-width="1"/></svg>
<span class="t" style="left:35.00px;top:537.99px;font-size:11px;color:#333333;letter-spacing:0.084px;">Интеграторы</span>
<svg class="b" style="left:34px;top:563.5px;" width="14" height="14" viewBox="0 0 14 14"><rect x="0.5" y="0.5" width="13" height="13" fill="#fdfdfd" stroke="#9a9a9a" stroke-width="1"/></svg>
<span class="t" style="left:50.60px;top:562.49px;font-size:11px;color:#333333;letter-spacing:-0.162px;">Месячный архив</span>
<svg class="b" style="left:34px;top:588.5px;" width="14" height="14" viewBox="0 0 14 14"><rect x="0.5" y="0.5" width="13" height="13" fill="#fdfdfd" stroke="#9a9a9a" stroke-width="1"/><path d="M3.2,7.2 L5.8,10 L10.8,3.8" fill="none" stroke="#888" stroke-width="1.2"/></svg>
<span class="t" style="left:50.60px;top:587.49px;font-size:11px;color:#333333;letter-spacing:0.025px;">Суточный архив</span>
<svg class="b" style="left:34px;top:611.3px;" width="14" height="14" viewBox="0 0 14 14"><rect x="0.5" y="0.5" width="13" height="13" fill="#fdfdfd" stroke="#9a9a9a" stroke-width="1"/><path d="M3.2,7.2 L5.8,10 L10.8,3.8" fill="none" stroke="#888" stroke-width="1.2"/></svg>
<span class="t" style="left:50.60px;top:610.29px;font-size:11px;color:#333333;letter-spacing:-0.079px;">Часовой архив</span>
<svg class="b" style="left:34px;top:634px;" width="14" height="14" viewBox="0 0 14 14"><rect x="0.5" y="0.5" width="13" height="13" fill="#fdfdfd" stroke="#9a9a9a" stroke-width="1"/></svg>
<span class="t" style="left:50.60px;top:632.99px;font-size:11px;color:#333333;letter-spacing:0.016px;">Текущие значения</span>
<div class="b" style="left:83px;top:674px;width:90px;height:22px;background:#fdfdfd;border:1px solid #ababab;"></div>
<span class="t" style="left:99.20px;top:677.19px;font-size:11px;color:#333333;letter-spacing:-0.237px;">Применить</span>
<div class="b" style="left:186px;top:181px;width:1424px;height:522px;background:#ffffff;"></div>
<div class="b" style="left:187px;top:182px;width:1423px;height:45px;background:#f8f8f8;"></div>
<div class="b" style="left:187px;top:228px;width:1423px;height:416px;background:#f0f0f0;"></div>
<div class="b" style="left:186px;top:181px;width:1424px;height:1px;background:#a9a9a9;"></div>
<div class="b" style="left:187px;top:227px;width:1423px;height:1px;background:#a9a9a9;"></div>
<div class="b" style="left:186px;top:181px;width:1px;height:463px;background:#a9a9a9;"></div>
<div class="b" style="left:1609px;top:181px;width:1px;height:463px;background:#a9a9a9;"></div>
<div class="b" style="left:1610px;top:181px;width:1px;height:522px;background:#c8c8c8;"></div>
<div class="b" style="left:347px;top:204px;width:225px;height:1px;background:#a9a9a9;"></div>
<div class="b" style="left:572px;top:204px;width:150px;height:1px;background:#a9a9a9;"></div>
<div class="b" style="left:822px;top:204px;width:306px;height:1px;background:#a9a9a9;"></div>
<div class="b" style="left:1128px;top:204px;width:231px;height:1px;background:#a9a9a9;"></div>
<div class="b" style="left:1359px;top:204px;width:100px;height:1px;background:#a9a9a9;"></div>
<div class="b" style="left:1459px;top:204px;width:150px;height:1px;background:#a9a9a9;"></div>
<div class="b" style="left:347px;top:182px;width:1px;height:45px;background:#a9a9a9;"></div>
<div class="b" style="left:422px;top:205px;width:1px;height:22px;background:#a9a9a9;"></div>
<div class="b" style="left:497px;top:205px;width:1px;height:22px;background:#a9a9a9;"></div>
<div class="b" style="left:572px;top:182px;width:1px;height:45px;background:#a9a9a9;"></div>
<div class="b" style="left:647px;top:205px;width:1px;height:22px;background:#a9a9a9;"></div>
<div class="b" style="left:722px;top:182px;width:1px;height:45px;background:#a9a9a9;"></div>
<div class="b" style="left:822px;top:182px;width:1px;height:45px;background:#a9a9a9;"></div>
<div class="b" style="left:900px;top:205px;width:1px;height:22px;background:#a9a9a9;"></div>
<div class="b" style="left:978px;top:205px;width:1px;height:22px;background:#a9a9a9;"></div>
<div class="b" style="left:1053px;top:205px;width:1px;height:22px;background:#a9a9a9;"></div>
<div class="b" style="left:1128px;top:182px;width:1px;height:45px;background:#a9a9a9;"></div>
<div class="b" style="left:1206px;top:205px;width:1px;height:22px;background:#a9a9a9;"></div>
<div class="b" style="left:1284px;top:205px;width:1px;height:22px;background:#a9a9a9;"></div>
<div class="b" style="left:1359px;top:182px;width:1px;height:45px;background:#a9a9a9;"></div>
<div class="b" style="left:1459px;top:182px;width:1px;height:45px;background:#a9a9a9;"></div>
<div class="b" style="left:1534px;top:205px;width:1px;height:22px;background:#a9a9a9;"></div>
<span class="t" style="left:233.90px;top:197.09px;font-size:11px;color:#6a6a6a;letter-spacing:-0.152px;">Дата - Время</span>
<span class="t" style="left:417.25px;top:185.19px;font-size:11px;color:#6a6a6a;letter-spacing:-0.038px;">Температура, °C</span>
<span class="t" style="left:613.00px;top:185.19px;font-size:11px;color:#6a6a6a;letter-spacing:0.054px;">Давление, ат</span>
<span class="t" style="left:750.10px;top:190.19px;font-size:11px;color:#6a6a6a;letter-spacing:-0.136px;">Перепад</span>
<span class="t" style="left:738.50px;top:202.79px;font-size:11px;color:#6a6a6a;letter-spacing:0.136px;">давления, ат</span>
<span class="t" style="left:953.30px;top:185.19px;font-size:11px;color:#6a6a6a;letter-spacing:-0.121px;">Масса, т</span>
<span class="t" style="left:1218.60px;top:185.19px;font-size:11px;color:#6a6a6a;letter-spacing:-0.176px;">Объем, м³</span>
<span class="t" style="left:1365.60px;top:185.19px;font-size:11px;color:#6a6a6a;letter-spacing:-0.168px;">Тепловая энерг…</span>
<span class="t" style="left:1512.30px;top:185.19px;font-size:11px;color:#6a6a6a;letter-spacing:-0.217px;">Время, ч</span>
<span class="t" style="left:378.23px;top:208.19px;font-size:11px;color:#6a6a6a;">T1</span>
<span class="t" style="left:453.08px;top:208.19px;font-size:11px;color:#6a6a6a;">T2</span>
<span class="t" style="left:528.07px;top:208.19px;font-size:11px;color:#6a6a6a;">ΔT</span>
<span class="t" style="left:602.82px;top:208.19px;font-size:11px;color:#6a6a6a;">P1</span>
<span class="t" style="left:677.77px;top:208.19px;font-size:11px;color:#6a6a6a;">P2</span>
<span class="t" style="left:853.71px;top:208.19px;font-size:11px;color:#6a6a6a;">M1</span>
<span class="t" style="left:931.81px;top:208.19px;font-size:11px;color:#6a6a6a;">M2</span>
<span class="t" style="left:1007.64px;top:208.19px;font-size:11px;color:#6a6a6a;">ΔM</span>
<span class="t" style="left:1081.68px;top:208.19px;font-size:11px;color:#6a6a6a;">%M</span>
<span class="t" style="left:1160.97px;top:208.19px;font-size:11px;color:#6a6a6a;">V1</span>
<span class="t" style="left:1238.92px;top:208.19px;font-size:11px;color:#6a6a6a;">V2</span>
<span class="t" style="left:1314.76px;top:208.19px;font-size:11px;color:#6a6a6a;">ΔV</span>
<span class="t" style="left:1401.30px;top:208.19px;font-size:11px;color:#6a6a6a;">ΔQ</span>
<span class="t" style="left:1484.23px;top:208.19px;font-size:11px;color:#6a6a6a;">Траб</span>
<span class="t" style="left:1564.02px;top:208.19px;font-size:11px;color:#6a6a6a;">Тф</span>
<div class="b" style="left:187px;top:514px;width:1423px;height:25px;background:#cce4f7;"></div>
<div class="b" style="left:187px;top:253px;width:1423px;height:1px;background:#cfcfcf;"></div>
<div class="b" style="left:187px;top:279px;width:1423px;height:1px;background:#cfcfcf;"></div>
<div class="b" style="left:187px;top:305px;width:1423px;height:1px;background:#cfcfcf;"></div>
<div class="b" style="left:187px;top:331px;width:1423px;height:1px;background:#cfcfcf;"></div>
<div class="b" style="left:187px;top:357px;width:1423px;height:1px;background:#cfcfcf;"></div>
<div class="b" style="left:187px;top:383px;width:1423px;height:1px;background:#cfcfcf;"></div>
<div class="b" style="left:187px;top:409px;width:1423px;height:1px;background:#cfcfcf;"></div>
<div class="b" style="left:187px;top:435px;width:1423px;height:1px;background:#cfcfcf;"></div>
<div class="b" style="left:187px;top:461px;width:1423px;height:1px;background:#cfcfcf;"></div>
<div class="b" style="left:187px;top:487px;width:1423px;height:1px;background:#cfcfcf;"></div>
<div class="b" style="left:187px;top:513px;width:1423px;height:1px;background:#cfcfcf;"></div>
<div class="b" style="left:187px;top:539px;width:1423px;height:1px;background:#cfcfcf;"></div>
<div class="b" style="left:187px;top:565px;width:1423px;height:1px;background:#cfcfcf;"></div>
<div class="b" style="left:187px;top:591px;width:1423px;height:1px;background:#cfcfcf;"></div>
<div class="b" style="left:187px;top:617px;width:1423px;height:1px;background:#cfcfcf;"></div>
<div class="b" style="left:187px;top:643px;width:1423px;height:1px;background:#cfcfcf;"></div>
<div class="b" style="left:422px;top:228px;width:1px;height:415px;background:#cfcfcf;"></div>
<div class="b" style="left:497px;top:228px;width:1px;height:415px;background:#cfcfcf;"></div>
<div class="b" style="left:572px;top:228px;width:1px;height:415px;background:#cfcfcf;"></div>
<div class="b" style="left:647px;top:228px;width:1px;height:415px;background:#cfcfcf;"></div>
<div class="b" style="left:722px;top:228px;width:1px;height:415px;background:#cfcfcf;"></div>
<div class="b" style="left:822px;top:228px;width:1px;height:415px;background:#cfcfcf;"></div>
<div class="b" style="left:900px;top:228px;width:1px;height:415px;background:#cfcfcf;"></div>
<div class="b" style="left:978px;top:228px;width:1px;height:415px;background:#cfcfcf;"></div>
<div class="b" style="left:1053px;top:228px;width:1px;height:415px;background:#cfcfcf;"></div>
<div class="b" style="left:1128px;top:228px;width:1px;height:415px;background:#cfcfcf;"></div>
<div class="b" style="left:1206px;top:228px;width:1px;height:415px;background:#cfcfcf;"></div>
<div class="b" style="left:1284px;top:228px;width:1px;height:415px;background:#cfcfcf;"></div>
<div class="b" style="left:1359px;top:228px;width:1px;height:415px;background:#cfcfcf;"></div>
<div class="b" style="left:1459px;top:228px;width:1px;height:415px;background:#cfcfcf;"></div>
<div class="b" style="left:1534px;top:228px;width:1px;height:415px;background:#cfcfcf;"></div>
<div class="b" style="left:347px;top:514px;width:1px;height:25px;background:#f2f8fd;"></div>
<div class="b" style="left:422px;top:514px;width:1px;height:25px;background:#f2f8fd;"></div>
<div class="b" style="left:497px;top:514px;width:1px;height:25px;background:#f2f8fd;"></div>
<div class="b" style="left:572px;top:514px;width:1px;height:25px;background:#f2f8fd;"></div>
<div class="b" style="left:647px;top:514px;width:1px;height:25px;background:#f2f8fd;"></div>
<div class="b" style="left:722px;top:514px;width:1px;height:25px;background:#f2f8fd;"></div>
<div class="b" style="left:822px;top:514px;width:1px;height:25px;background:#f2f8fd;"></div>
<div class="b" style="left:900px;top:514px;width:1px;height:25px;background:#f2f8fd;"></div>
<div class="b" style="left:978px;top:514px;width:1px;height:25px;background:#f2f8fd;"></div>
<div class="b" style="left:1053px;top:514px;width:1px;height:25px;background:#f2f8fd;"></div>
<div class="b" style="left:1128px;top:514px;width:1px;height:25px;background:#f2f8fd;"></div>
<div class="b" style="left:1206px;top:514px;width:1px;height:25px;background:#f2f8fd;"></div>
<div class="b" style="left:1284px;top:514px;width:1px;height:25px;background:#f2f8fd;"></div>
<div class="b" style="left:1359px;top:514px;width:1px;height:25px;background:#f2f8fd;"></div>
<div class="b" style="left:1459px;top:514px;width:1px;height:25px;background:#f2f8fd;"></div>
<div class="b" style="left:1534px;top:514px;width:1px;height:25px;background:#f2f8fd;"></div>
<div class="b" style="left:187px;top:513px;width:1423px;height:27px;border-top:1px dotted #3a3a3a;border-bottom:1px dotted #3a3a3a;"></div>
<div class="b" style="left:187px;top:513px;width:1px;height:27px;border-left:1px dotted #3a3a3a;"></div>
<div class="b" style="left:1608px;top:513px;width:1px;height:27px;border-left:1px dotted #3a3a3a;"></div>
<svg class="b" style="left:197.5px;top:234px;" width="7" height="12" viewBox="0 0 7 12"><path d="M1,1 L5.6,5.6 L1,10.2" fill="none" stroke="#333" stroke-width="1.3"/></svg>
<span class="t" style="left:206.60px;top:232.89px;font-size:11px;color:#333333;letter-spacing:0.095px;">01.12.2025</span>
<span class="t" style="left:380.84px;top:232.89px;font-size:11px;color:#333333;">95,0000</span>
<span class="t" style="left:455.84px;top:232.89px;font-size:11px;color:#333333;">70,0000</span>
<span class="t" style="left:530.84px;top:232.89px;font-size:11px;color:#333333;">25,0000</span>
<span class="t" style="left:611.96px;top:232.89px;font-size:11px;color:#333333;">3,7000</span>
<span class="t" style="left:686.96px;top:232.89px;font-size:11px;color:#333333;">1,5000</span>
<span class="t" style="left:786.96px;top:232.89px;font-size:11px;color:#333333;">2,2000</span>
<span class="t" style="left:864.96px;top:232.89px;font-size:11px;color:#333333;">0,0000</span>
<span class="t" style="left:942.96px;top:232.89px;font-size:11px;color:#333333;">0,0000</span>
<span class="t" style="left:1017.96px;top:232.89px;font-size:11px;color:#333333;">0,0000</span>
<span class="t" style="left:1122.94px;top:232.89px;font-size:11px;color:#333333;">-</span>
<span class="t" style="left:1170.96px;top:232.89px;font-size:11px;color:#333333;">0,0000</span>
<span class="t" style="left:1248.96px;top:232.89px;font-size:11px;color:#333333;">0,0000</span>
<span class="t" style="left:1323.96px;top:232.89px;font-size:11px;color:#333333;">0,0000</span>
<span class="t" style="left:1423.96px;top:232.89px;font-size:11px;color:#333333;">0,0000</span>
<span class="t" style="left:1489.78px;top:232.89px;font-size:11px;color:#333333;">24:00:00</span>
<span class="t" style="left:1603.94px;top:232.89px;font-size:11px;color:#333333;">-</span>
<svg class="b" style="left:197.5px;top:260px;" width="7" height="12" viewBox="0 0 7 12"><path d="M1,1 L5.6,5.6 L1,10.2" fill="none" stroke="#333" stroke-width="1.3"/></svg>
<span class="t" style="left:206.60px;top:258.89px;font-size:11px;color:#333333;letter-spacing:0.095px;">02.12.2025</span>
<span class="t" style="left:380.84px;top:258.89px;font-size:11px;color:#333333;">95,0000</span>
<span class="t" style="left:455.84px;top:258.89px;font-size:11px;color:#333333;">70,0000</span>
<span class="t" style="left:530.84px;top:258.89px;font-size:11px;color:#333333;">25,0000</span>
<span class="t" style="left:611.96px;top:258.89px;font-size:11px;color:#333333;">3,7000</span>
<span class="t" style="left:686.96px;top:258.89px;font-size:11px;color:#333333;">1,5000</span>
<span class="t" style="left:786.96px;top:258.89px;font-size:11px;color:#333333;">2,2000</span>
<span class="t" style="left:864.96px;top:258.89px;font-size:11px;color:#333333;">0,0000</span>
<span class="t" style="left:942.96px;top:258.89px;font-size:11px;color:#333333;">0,0000</span>
<span class="t" style="left:1017.96px;top:258.89px;font-size:11px;color:#333333;">0,0000</span>
<span class="t" style="left:1122.94px;top:258.89px;font-size:11px;color:#333333;">-</span>
<span class="t" style="left:1170.96px;top:258.89px;font-size:11px;color:#333333;">0,0000</span>
<span class="t" style="left:1248.96px;top:258.89px;font-size:11px;color:#333333;">0,0000</span>
<span class="t" style="left:1323.96px;top:258.89px;font-size:11px;color:#333333;">0,0000</span>
<span class="t" style="left:1423.96px;top:258.89px;font-size:11px;color:#333333;">0,0000</span>
<span class="t" style="left:1489.78px;top:258.89px;font-size:11px;color:#333333;">24:00:00</span>
<span class="t" style="left:1603.94px;top:258.89px;font-size:11px;color:#333333;">-</span>
<svg class="b" style="left:197.5px;top:286px;" width="7" height="12" viewBox="0 0 7 12"><path d="M1,1 L5.6,5.6 L1,10.2" fill="none" stroke="#333" stroke-width="1.3"/></svg>
<span class="t" style="left:206.60px;top:284.89px;font-size:11px;color:#333333;letter-spacing:0.095px;">03.12.2025</span>
<span class="t" style="left:380.84px;top:284.89px;font-size:11px;color:#333333;">95,0000</span>
<span class="t" style="left:455.84px;top:284.89px;font-size:11px;color:#333333;">70,0000</span>
<span class="t" style="left:530.84px;top:284.89px;font-size:11px;color:#333333;">25,0000</span>
<span class="t" style="left:611.96px;top:284.89px;font-size:11px;color:#333333;">3,7000</span>
<span class="t" style="left:686.96px;top:284.89px;font-size:11px;color:#333333;">1,5000</span>
<span class="t" style="left:786.96px;top:284.89px;font-size:11px;color:#333333;">2,2000</span>
<span class="t" style="left:864.96px;top:284.89px;font-size:11px;color:#333333;">2,0204</span>
<span class="t" style="left:942.96px;top:284.89px;font-size:11px;color:#333333;">0,0978</span>
<span class="t" style="left:1017.96px;top:284.89px;font-size:11px;color:#333333;">1,9226</span>
<span class="t" style="left:1077.06px;top:284.89px;font-size:11px;color:#333333;">95,1601%</span>
<span class="t" style="left:1170.96px;top:284.89px;font-size:11px;color:#333333;">2,1000</span>
<span class="t" style="left:1248.96px;top:284.89px;font-size:11px;color:#333333;">0,1000</span>
<span class="t" style="left:1323.96px;top:284.89px;font-size:11px;color:#333333;">2,0000</span>
<span class="t" style="left:1423.96px;top:284.89px;font-size:11px;color:#333333;">0,1756</span>
<span class="t" style="left:1489.78px;top:284.89px;font-size:11px;color:#333333;">24:00:00</span>
<span class="t" style="left:1603.94px;top:284.89px;font-size:11px;color:#333333;">-</span>
<svg class="b" style="left:197.5px;top:312px;" width="7" height="12" viewBox="0 0 7 12"><path d="M1,1 L5.6,5.6 L1,10.2" fill="none" stroke="#333" stroke-width="1.3"/></svg>
<span class="t" style="left:206.60px;top:310.89px;font-size:11px;color:#333333;letter-spacing:0.095px;">04.12.2025</span>
<span class="t" style="left:380.84px;top:310.89px;font-size:11px;color:#333333;">95,0000</span>
<span class="t" style="left:455.84px;top:310.89px;font-size:11px;color:#333333;">70,0000</span>
<span class="t" style="left:530.84px;top:310.89px;font-size:11px;color:#333333;">25,0000</span>
<span class="t" style="left:611.96px;top:310.89px;font-size:11px;color:#333333;">4,0361</span>
<span class="t" style="left:686.96px;top:310.89px;font-size:11px;color:#333333;">3,1914</span>
<span class="t" style="left:786.96px;top:310.89px;font-size:11px;color:#333333;">0,8446</span>
<span class="t" style="left:864.96px;top:310.89px;font-size:11px;color:#333333;">0,0000</span>
<span class="t" style="left:942.96px;top:310.89px;font-size:11px;color:#333333;">0,0000</span>
<span class="t" style="left:1017.96px;top:310.89px;font-size:11px;color:#333333;">0,0000</span>
<span class="t" style="left:1122.94px;top:310.89px;font-size:11px;color:#333333;">-</span>
<span class="t" style="left:1170.96px;top:310.89px;font-size:11px;color:#333333;">0,0000</span>
<span class="t" style="left:1248.96px;top:310.89px;font-size:11px;color:#333333;">0,0000</span>
<span class="t" style="left:1323.96px;top:310.89px;font-size:11px;color:#333333;">0,0000</span>
<span class="t" style="left:1423.96px;top:310.89px;font-size:11px;color:#333333;">0,0000</span>
<span class="t" style="left:1489.78px;top:310.89px;font-size:11px;color:#333333;">24:00:00</span>
<span class="t" style="left:1603.94px;top:310.89px;font-size:11px;color:#333333;">-</span>
<svg class="b" style="left:197.5px;top:338px;" width="7" height="12" viewBox="0 0 7 12"><path d="M1,1 L5.6,5.6 L1,10.2" fill="none" stroke="#333" stroke-width="1.3"/></svg>
<span class="t" style="left:206.60px;top:336.89px;font-size:11px;color:#333333;letter-spacing:0.095px;">05.12.2025</span>
<span class="t" style="left:380.84px;top:336.89px;font-size:11px;color:#333333;">95,0000</span>
<span class="t" style="left:455.84px;top:336.89px;font-size:11px;color:#333333;">70,0000</span>
<span class="t" style="left:530.84px;top:336.89px;font-size:11px;color:#333333;">25,0000</span>
<span class="t" style="left:611.96px;top:336.89px;font-size:11px;color:#333333;">4,0436</span>
<span class="t" style="left:686.96px;top:336.89px;font-size:11px;color:#333333;">3,1956</span>
<span class="t" style="left:786.96px;top:336.89px;font-size:11px;color:#333333;">0,8481</span>
<span class="t" style="left:864.96px;top:336.89px;font-size:11px;color:#333333;">0,0000</span>
<span class="t" style="left:942.96px;top:336.89px;font-size:11px;color:#333333;">0,0000</span>
<span class="t" style="left:1017.96px;top:336.89px;font-size:11px;color:#333333;">0,0000</span>
<span class="t" style="left:1122.94px;top:336.89px;font-size:11px;color:#333333;">-</span>
<span class="t" style="left:1170.96px;top:336.89px;font-size:11px;color:#333333;">0,0000</span>
<span class="t" style="left:1248.96px;top:336.89px;font-size:11px;color:#333333;">0,0000</span>
<span class="t" style="left:1323.96px;top:336.89px;font-size:11px;color:#333333;">0,0000</span>
<span class="t" style="left:1423.96px;top:336.89px;font-size:11px;color:#333333;">0,0000</span>
<span class="t" style="left:1489.78px;top:336.89px;font-size:11px;color:#333333;">24:00:00</span>
<span class="t" style="left:1603.94px;top:336.89px;font-size:11px;color:#333333;">-</span>
<svg class="b" style="left:197.5px;top:364px;" width="7" height="12" viewBox="0 0 7 12"><path d="M1,1 L5.6,5.6 L1,10.2" fill="none" stroke="#333" stroke-width="1.3"/></svg>
<span class="t" style="left:206.60px;top:362.89px;font-size:11px;color:#333333;letter-spacing:0.095px;">06.12.2025</span>
<span class="t" style="left:380.84px;top:362.89px;font-size:11px;color:#333333;">95,0000</span>
<span class="t" style="left:455.84px;top:362.89px;font-size:11px;color:#333333;">70,0000</span>
<span class="t" style="left:530.84px;top:362.89px;font-size:11px;color:#333333;">25,0000</span>
<span class="t" style="left:611.96px;top:362.89px;font-size:11px;color:#333333;">4,1286</span>
<span class="t" style="left:686.96px;top:362.89px;font-size:11px;color:#333333;">3,2765</span>
<span class="t" style="left:786.96px;top:362.89px;font-size:11px;color:#333333;">0,8521</span>
<span class="t" style="left:864.96px;top:362.89px;font-size:11px;color:#333333;">0,0000</span>
<span class="t" style="left:942.96px;top:362.89px;font-size:11px;color:#333333;">0,0000</span>
<span class="t" style="left:1017.96px;top:362.89px;font-size:11px;color:#333333;">0,0000</span>
<span class="t" style="left:1122.94px;top:362.89px;font-size:11px;color:#333333;">-</span>
<span class="t" style="left:1170.96px;top:362.89px;font-size:11px;color:#333333;">0,0000</span>
<span class="t" style="left:1248.96px;top:362.89px;font-size:11px;color:#333333;">0,0000</span>
<span class="t" style="left:1323.96px;top:362.89px;font-size:11px;color:#333333;">0,0000</span>
<span class="t" style="left:1423.96px;top:362.89px;font-size:11px;color:#333333;">0,0000</span>
<span class="t" style="left:1489.78px;top:362.89px;font-size:11px;color:#333333;">24:00:00</span>
<span class="t" style="left:1603.94px;top:362.89px;font-size:11px;color:#333333;">-</span>
<svg class="b" style="left:197.5px;top:390px;" width="7" height="12" viewBox="0 0 7 12"><path d="M1,1 L5.6,5.6 L1,10.2" fill="none" stroke="#333" stroke-width="1.3"/></svg>
<span class="t" style="left:206.60px;top:388.89px;font-size:11px;color:#333333;letter-spacing:0.095px;">07.12.2025</span>
<span class="t" style="left:380.84px;top:388.89px;font-size:11px;color:#333333;">68,6884</span>
<span class="t" style="left:455.84px;top:388.89px;font-size:11px;color:#333333;">51,1661</span>
<span class="t" style="left:530.84px;top:388.89px;font-size:11px;color:#333333;">17,5224</span>
<span class="t" style="left:611.96px;top:388.89px;font-size:11px;color:#333333;">4,3966</span>
<span class="t" style="left:686.96px;top:388.89px;font-size:11px;color:#333333;">3,3076</span>
<span class="t" style="left:786.96px;top:388.89px;font-size:11px;color:#333333;">1,0890</span>
<span class="t" style="left:852.72px;top:388.89px;font-size:11px;color:#333333;">990,4976</span>
<span class="t" style="left:930.72px;top:388.89px;font-size:11px;color:#333333;">906,0002</span>
<span class="t" style="left:1011.84px;top:388.89px;font-size:11px;color:#333333;">84,4974</span>
<span class="t" style="left:1083.18px;top:388.89px;font-size:11px;color:#333333;">8,5308%</span>
<span class="t" style="left:1149.55px;top:388.89px;font-size:11px;color:#333333;">1 012,0251</span>
<span class="t" style="left:1236.72px;top:388.89px;font-size:11px;color:#333333;">917,3000</span>
<span class="t" style="left:1317.84px;top:388.89px;font-size:11px;color:#333333;">94,7251</span>
<span class="t" style="left:1417.84px;top:388.89px;font-size:11px;color:#333333;">21,2779</span>
<span class="t" style="left:1489.78px;top:388.89px;font-size:11px;color:#333333;">24:00:00</span>
<span class="t" style="left:1603.94px;top:388.89px;font-size:11px;color:#333333;">-</span>
<svg class="b" style="left:197.5px;top:416px;" width="7" height="12" viewBox="0 0 7 12"><path d="M1,1 L5.6,5.6 L1,10.2" fill="none" stroke="#333" stroke-width="1.3"/></svg>
<span class="t" style="left:206.60px;top:414.89px;font-size:11px;color:#333333;letter-spacing:0.095px;">08.12.2025</span>
<span class="t" style="left:380.84px;top:414.89px;font-size:11px;color:#333333;">69,5131</span>
<span class="t" style="left:455.84px;top:414.89px;font-size:11px;color:#333333;">53,4390</span>
<span class="t" style="left:530.84px;top:414.89px;font-size:11px;color:#333333;">16,0741</span>
<span class="t" style="left:611.96px;top:414.89px;font-size:11px;color:#333333;">4,2964</span>
<span class="t" style="left:686.96px;top:414.89px;font-size:11px;color:#333333;">6,2262</span>
<span class="t" style="left:783.30px;top:414.89px;font-size:11px;color:#333333;">-1,9298</span>
<span class="t" style="left:843.55px;top:414.89px;font-size:11px;color:#333333;">4 603,1069</span>
<span class="t" style="left:921.55px;top:414.89px;font-size:11px;color:#333333;">4 279,9937</span>
<span class="t" style="left:1006.54px;top:414.89px;font-size:11px;color:#333333;">323,1133</span>
<span class="t" style="left:1083.18px;top:414.89px;font-size:11px;color:#333333;">7,0195%</span>
<span class="t" style="left:1149.55px;top:414.89px;font-size:11px;color:#333333;">4 705,3501</span>
<span class="t" style="left:1227.55px;top:414.89px;font-size:11px;color:#333333;">4 337,4248</span>
<span class="t" style="left:1311.72px;top:414.89px;font-size:11px;color:#333333;">367,9253</span>
<span class="t" style="left:1417.84px;top:414.89px;font-size:11px;color:#333333;">89,4962</span>
<span class="t" style="left:1489.78px;top:414.89px;font-size:11px;color:#333333;">24:00:00</span>
<span class="t" style="left:1603.94px;top:414.89px;font-size:11px;color:#333333;">-</span>
<svg class="b" style="left:197.5px;top:442px;" width="7" height="12" viewBox="0 0 7 12"><path d="M1,1 L5.6,5.6 L1,10.2" fill="none" stroke="#333" stroke-width="1.3"/></svg>
<span class="t" style="left:206.60px;top:440.89px;font-size:11px;color:#333333;letter-spacing:0.095px;">09.12.2025</span>
<span class="t" style="left:380.84px;top:440.89px;font-size:11px;color:#333333;">69,0439</span>
<span class="t" style="left:455.84px;top:440.89px;font-size:11px;color:#333333;">52,3605</span>
<span class="t" style="left:530.84px;top:440.89px;font-size:11px;color:#333333;">16,6834</span>
<span class="t" style="left:611.96px;top:440.89px;font-size:11px;color:#333333;">4,3364</span>
<span class="t" style="left:686.96px;top:440.89px;font-size:11px;color:#333333;">8,1666</span>
<span class="t" style="left:783.30px;top:440.89px;font-size:11px;color:#333333;">-3,8302</span>
<span class="t" style="left:843.55px;top:440.89px;font-size:11px;color:#333333;">4 577,7231</span>
<span class="t" style="left:921.55px;top:440.89px;font-size:11px;color:#333333;">4 312,7236</span>
<span class="t" style="left:1005.72px;top:440.89px;font-size:11px;color:#333333;">264,9995</span>
<span class="t" style="left:1083.18px;top:440.89px;font-size:11px;color:#333333;">5,7889%</span>
<span class="t" style="left:1149.55px;top:440.89px;font-size:11px;color:#333333;">4 678,1250</span>
<span class="t" style="left:1227.55px;top:440.89px;font-size:11px;color:#333333;">4 367,9751</span>
<span class="t" style="left:1311.72px;top:440.89px;font-size:11px;color:#333333;">310,1499</span>
<span class="t" style="left:1417.84px;top:440.89px;font-size:11px;color:#333333;">88,6088</span>
<span class="t" style="left:1489.78px;top:440.89px;font-size:11px;color:#333333;">24:00:00</span>
<span class="t" style="left:1603.94px;top:440.89px;font-size:11px;color:#333333;">-</span>
<svg class="b" style="left:197.5px;top:468px;" width="7" height="12" viewBox="0 0 7 12"><path d="M1,1 L5.6,5.6 L1,10.2" fill="none" stroke="#333" stroke-width="1.3"/></svg>
<span class="t" style="left:206.60px;top:466.89px;font-size:11px;color:#333333;letter-spacing:0.095px;">10.12.2025</span>
<span class="t" style="left:380.84px;top:466.89px;font-size:11px;color:#333333;">68,7353</span>
<span class="t" style="left:455.84px;top:466.89px;font-size:11px;color:#333333;">52,5685</span>
<span class="t" style="left:530.84px;top:466.89px;font-size:11px;color:#333333;">16,1668</span>
<span class="t" style="left:611.96px;top:466.89px;font-size:11px;color:#333333;">4,3093</span>
<span class="t" style="left:686.96px;top:466.89px;font-size:11px;color:#333333;">4,6859</span>
<span class="t" style="left:783.30px;top:466.89px;font-size:11px;color:#333333;">-0,3765</span>
<span class="t" style="left:843.55px;top:466.89px;font-size:11px;color:#333333;">4 585,9966</span>
<span class="t" style="left:921.55px;top:466.89px;font-size:11px;color:#333333;">4 346,4370</span>
<span class="t" style="left:1005.72px;top:466.89px;font-size:11px;color:#333333;">239,5596</span>
<span class="t" style="left:1083.18px;top:466.89px;font-size:11px;color:#333333;">5,2237%</span>
<span class="t" style="left:1149.55px;top:466.89px;font-size:11px;color:#333333;">4 685,7500</span>
<span class="t" style="left:1227.55px;top:466.89px;font-size:11px;color:#333333;">4 403,2246</span>
<span class="t" style="left:1311.72px;top:466.89px;font-size:11px;color:#333333;">282,5254</span>
<span class="t" style="left:1417.84px;top:466.89px;font-size:11px;color:#333333;">85,5193</span>
<span class="t" style="left:1489.78px;top:466.89px;font-size:11px;color:#333333;">24:00:00</span>
<span class="t" style="left:1603.94px;top:466.89px;font-size:11px;color:#333333;">-</span>
<svg class="b" style="left:197.5px;top:494px;" width="7" height="12" viewBox="0 0 7 12"><path d="M1,1 L5.6,5.6 L1,10.2" fill="none" stroke="#333" stroke-width="1.3"/></svg>
<span class="t" style="left:206.60px;top:492.89px;font-size:11px;color:#333333;letter-spacing:0.177px;">11.12.2025</span>
<span class="t" style="left:380.84px;top:492.89px;font-size:11px;color:#333333;">67,4538</span>
<span class="t" style="left:455.84px;top:492.89px;font-size:11px;color:#333333;">51,9446</span>
<span class="t" style="left:530.84px;top:492.89px;font-size:11px;color:#333333;">15,5092</span>
<span class="t" style="left:611.96px;top:492.89px;font-size:11px;color:#333333;">4,3616</span>
<span class="t" style="left:686.96px;top:492.89px;font-size:11px;color:#333333;">3,4103</span>
<span class="t" style="left:786.96px;top:492.89px;font-size:11px;color:#333333;">0,9513</span>
<span class="t" style="left:843.55px;top:492.89px;font-size:11px;color:#333333;">4 600,2510</span>
<span class="t" style="left:921.55px;top:492.89px;font-size:11px;color:#333333;">4 332,5664</span>
<span class="t" style="left:1005.72px;top:492.89px;font-size:11px;color:#333333;">267,6846</span>
<span class="t" style="left:1083.18px;top:492.89px;font-size:11px;color:#333333;">5,8189%</span>
<span class="t" style="left:1149.55px;top:492.89px;font-size:11px;color:#333333;">4 696,8501</span>
<span class="t" style="left:1227.55px;top:492.89px;font-size:11px;color:#333333;">4 388,1255</span>
<span class="t" style="left:1311.72px;top:492.89px;font-size:11px;color:#333333;">308,7246</span>
<span class="t" style="left:1417.84px;top:492.89px;font-size:11px;color:#333333;">84,0061</span>
<span class="t" style="left:1489.78px;top:492.89px;font-size:11px;color:#333333;">24:00:00</span>
<span class="t" style="left:1603.94px;top:492.89px;font-size:11px;color:#333333;">-</span>
<svg class="b" style="left:197.5px;top:520px;" width="7" height="12" viewBox="0 0 7 12"><path d="M1,1 L5.6,5.6 L1,10.2" fill="none" stroke="#333" stroke-width="1.3"/></svg>
<span class="t" style="left:206.60px;top:518.89px;font-size:11px;color:#333333;letter-spacing:0.095px;">12.12.2025</span>
<span class="t" style="left:380.84px;top:518.89px;font-size:11px;color:#333333;">66,5271</span>
<span class="t" style="left:455.84px;top:518.89px;font-size:11px;color:#333333;">51,7696</span>
<span class="t" style="left:530.84px;top:518.89px;font-size:11px;color:#333333;">14,7575</span>
<span class="t" style="left:611.96px;top:518.89px;font-size:11px;color:#333333;">4,0056</span>
<span class="t" style="left:686.96px;top:518.89px;font-size:11px;color:#333333;">3,0871</span>
<span class="t" style="left:786.96px;top:518.89px;font-size:11px;color:#333333;">0,9184</span>
<span class="t" style="left:843.55px;top:518.89px;font-size:11px;color:#333333;">2 325,6646</span>
<span class="t" style="left:921.55px;top:518.89px;font-size:11px;color:#333333;">2 096,5942</span>
<span class="t" style="left:1005.72px;top:518.89px;font-size:11px;color:#333333;">229,0702</span>
<span class="t" style="left:1083.18px;top:518.89px;font-size:11px;color:#333333;">9,8202%</span>
<span class="t" style="left:1149.55px;top:518.89px;font-size:11px;color:#333333;">2 373,3000</span>
<span class="t" style="left:1227.55px;top:518.89px;font-size:11px;color:#333333;">2 123,3501</span>
<span class="t" style="left:1311.72px;top:518.89px;font-size:11px;color:#333333;">249,9500</span>
<span class="t" style="left:1417.84px;top:518.89px;font-size:11px;color:#333333;">45,0449</span>
<span class="t" style="left:1489.78px;top:518.89px;font-size:11px;color:#333333;">12:00:00</span>
<span class="t" style="left:1603.94px;top:518.89px;font-size:11px;color:#333333;">-</span>
<svg class="b" style="left:197.5px;top:546px;" width="7" height="12" viewBox="0 0 7 12"><path d="M1,1 L5.6,5.6 L1,10.2" fill="none" stroke="#333" stroke-width="1.3"/></svg>
<span class="t" style="left:206.60px;top:544.89px;font-size:11px;color:#333333;letter-spacing:0.095px;">13.12.2025</span>
<span class="t" style="left:380.84px;top:544.89px;font-size:11px;color:#333333;">64,8381</span>
<span class="t" style="left:455.84px;top:544.89px;font-size:11px;color:#333333;">50,4665</span>
<span class="t" style="left:530.84px;top:544.89px;font-size:11px;color:#333333;">14,3716</span>
<span class="t" style="left:611.96px;top:544.89px;font-size:11px;color:#333333;">3,2661</span>
<span class="t" style="left:686.96px;top:544.89px;font-size:11px;color:#333333;">2,3571</span>
<span class="t" style="left:786.96px;top:544.89px;font-size:11px;color:#333333;">0,9090</span>
<span class="t" style="left:843.55px;top:544.89px;font-size:11px;color:#333333;">4 456,4009</span>
<span class="t" style="left:921.55px;top:544.89px;font-size:11px;color:#333333;">3 992,2581</span>
<span class="t" style="left:1005.72px;top:544.89px;font-size:11px;color:#333333;">464,1429</span>
<span class="t" style="left:1077.06px;top:544.89px;font-size:11px;color:#333333;">10,4142%</span>
<span class="t" style="left:1149.55px;top:544.89px;font-size:11px;color:#333333;">4 543,5249</span>
<span class="t" style="left:1227.55px;top:544.89px;font-size:11px;color:#333333;">4 040,8501</span>
<span class="t" style="left:1311.72px;top:544.89px;font-size:11px;color:#333333;">502,6750</span>
<span class="t" style="left:1417.84px;top:544.89px;font-size:11px;color:#333333;">85,2137</span>
<span class="t" style="left:1489.78px;top:544.89px;font-size:11px;color:#333333;">23:00:00</span>
<span class="t" style="left:1603.94px;top:544.89px;font-size:11px;color:#333333;">-</span>
<svg class="b" style="left:197.5px;top:572px;" width="7" height="12" viewBox="0 0 7 12"><path d="M1,1 L5.6,5.6 L1,10.2" fill="none" stroke="#333" stroke-width="1.3"/></svg>
<span class="t" style="left:206.60px;top:570.89px;font-size:11px;color:#333333;letter-spacing:0.095px;">14.12.2025</span>
<span class="t" style="left:380.84px;top:570.89px;font-size:11px;color:#333333;">66,0884</span>
<span class="t" style="left:455.84px;top:570.89px;font-size:11px;color:#333333;">51,0919</span>
<span class="t" style="left:530.84px;top:570.89px;font-size:11px;color:#333333;">14,9965</span>
<span class="t" style="left:611.96px;top:570.89px;font-size:11px;color:#333333;">3,6853</span>
<span class="t" style="left:686.96px;top:570.89px;font-size:11px;color:#333333;">2,7344</span>
<span class="t" style="left:786.96px;top:570.89px;font-size:11px;color:#333333;">0,9508</span>
<span class="t" style="left:843.55px;top:570.89px;font-size:11px;color:#333333;">4 445,5938</span>
<span class="t" style="left:921.55px;top:570.89px;font-size:11px;color:#333333;">4 157,4595</span>
<span class="t" style="left:1005.72px;top:570.89px;font-size:11px;color:#333333;">288,1342</span>
<span class="t" style="left:1083.18px;top:570.89px;font-size:11px;color:#333333;">6,4437%</span>
<span class="t" style="left:1149.55px;top:570.89px;font-size:11px;color:#333333;">4 535,5752</span>
<span class="t" style="left:1227.55px;top:570.89px;font-size:11px;color:#333333;">4 209,2002</span>
<span class="t" style="left:1311.72px;top:570.89px;font-size:11px;color:#333333;">326,3750</span>
<span class="t" style="left:1417.84px;top:570.89px;font-size:11px;color:#333333;">80,0479</span>
<span class="t" style="left:1489.78px;top:570.89px;font-size:11px;color:#333333;">23:00:00</span>
<span class="t" style="left:1603.94px;top:570.89px;font-size:11px;color:#333333;">-</span>
<svg class="b" style="left:197.5px;top:598px;" width="7" height="12" viewBox="0 0 7 12"><path d="M1,1 L5.6,5.6 L1,10.2" fill="none" stroke="#333" stroke-width="1.3"/></svg>
<span class="t" style="left:206.60px;top:596.89px;font-size:11px;color:#333333;letter-spacing:0.095px;">15.12.2025</span>
<span class="t" style="left:380.84px;top:596.89px;font-size:11px;color:#333333;">65,8446</span>
<span class="t" style="left:455.84px;top:596.89px;font-size:11px;color:#333333;">50,0816</span>
<span class="t" style="left:530.84px;top:596.89px;font-size:11px;color:#333333;">15,7631</span>
<span class="t" style="left:611.96px;top:596.89px;font-size:11px;color:#333333;">4,1553</span>
<span class="t" style="left:686.96px;top:596.89px;font-size:11px;color:#333333;">3,1814</span>
<span class="t" style="left:786.96px;top:596.89px;font-size:11px;color:#333333;">0,9739</span>
<span class="t" style="left:843.55px;top:596.89px;font-size:11px;color:#333333;">4 429,2798</span>
<span class="t" style="left:921.55px;top:596.89px;font-size:11px;color:#333333;">4 308,1826</span>
<span class="t" style="left:1005.72px;top:596.89px;font-size:11px;color:#333333;">121,0972</span>
<span class="t" style="left:1083.18px;top:596.89px;font-size:11px;color:#333333;">2,7339%</span>
<span class="t" style="left:1149.55px;top:596.89px;font-size:11px;color:#333333;">4 518,2251</span>
<span class="t" style="left:1227.55px;top:596.89px;font-size:11px;color:#333333;">4 359,7002</span>
<span class="t" style="left:1311.72px;top:596.89px;font-size:11px;color:#333333;">158,5250</span>
<span class="t" style="left:1417.84px;top:596.89px;font-size:11px;color:#333333;">75,3635</span>
<span class="t" style="left:1489.78px;top:596.89px;font-size:11px;color:#333333;">23:00:00</span>
<span class="t" style="left:1603.94px;top:596.89px;font-size:11px;color:#333333;">-</span>
<svg class="b" style="left:197.5px;top:624px;" width="7" height="12" viewBox="0 0 7 12"><path d="M1,1 L5.6,5.6 L1,10.2" fill="none" stroke="#333" stroke-width="1.3"/></svg>
<span class="t" style="left:206.60px;top:622.89px;font-size:11px;color:#333333;letter-spacing:0.095px;">16.12.2025</span>
<span class="t" style="left:416.94px;top:622.89px;font-size:11px;color:#333333;">-</span>
<span class="t" style="left:491.94px;top:622.89px;font-size:11px;color:#333333;">-</span>
<span class="t" style="left:566.94px;top:622.89px;font-size:11px;color:#333333;">-</span>
<span class="t" style="left:641.94px;top:622.89px;font-size:11px;color:#333333;">-</span>
<span class="t" style="left:716.94px;top:622.89px;font-size:11px;color:#333333;">-</span>
<span class="t" style="left:816.94px;top:622.89px;font-size:11px;color:#333333;">-</span>
<span class="t" style="left:894.94px;top:622.89px;font-size:11px;color:#333333;">-</span>
<span class="t" style="left:972.94px;top:622.89px;font-size:11px;color:#333333;">-</span>
<span class="t" style="left:1047.94px;top:622.89px;font-size:11px;color:#333333;">-</span>
<span class="t" style="left:1122.94px;top:622.89px;font-size:11px;color:#333333;">-</span>
<span class="t" style="left:1200.94px;top:622.89px;font-size:11px;color:#333333;">-</span>
<span class="t" style="left:1278.94px;top:622.89px;font-size:11px;color:#333333;">-</span>
<span class="t" style="left:1353.94px;top:622.89px;font-size:11px;color:#333333;">-</span>
<span class="t" style="left:1453.94px;top:622.89px;font-size:11px;color:#333333;">-</span>
<span class="t" style="left:1528.94px;top:622.89px;font-size:11px;color:#333333;">-</span>
<span class="t" style="left:1603.94px;top:622.89px;font-size:11px;color:#333333;">-</span>
<div class="b" style="left:186px;top:644px;width:1424px;height:5px;background:#848484;"></div>
<div class="b" style="left:193px;top:656px;width:154px;height:24px;background:#f0f0f0;"></div>
<span class="t" style="left:309.82px;top:660.39px;font-size:11px;color:#333333;">Итого:</span>
<div class="b" style="left:349px;top:656px;width:73px;height:24px;background:#f0f0f0;"></div>
<span class="t" style="left:379.24px;top:660.39px;font-size:11px;color:#333333;">78,4488</span>
<div class="b" style="left:424px;top:656px;width:73px;height:24px;background:#f0f0f0;"></div>
<span class="t" style="left:454.24px;top:660.39px;font-size:11px;color:#333333;">58,9926</span>
<div class="b" style="left:499px;top:656px;width:73px;height:24px;background:#f0f0f0;"></div>
<span class="t" style="left:529.24px;top:660.39px;font-size:11px;color:#333333;">19,4563</span>
<div class="b" style="left:574px;top:656px;width:73px;height:24px;background:#f0f0f0;"></div>
<span class="t" style="left:610.36px;top:660.39px;font-size:11px;color:#333333;">4,0081</span>
<div class="b" style="left:649px;top:656px;width:73px;height:24px;background:#f0f0f0;"></div>
<span class="t" style="left:685.36px;top:660.39px;font-size:11px;color:#333333;">3,4213</span>
<div class="b" style="left:724px;top:656px;width:98px;height:24px;background:#f0f0f0;"></div>
<span class="t" style="left:785.36px;top:660.39px;font-size:11px;color:#333333;">0,5867</span>
<div class="b" style="left:824px;top:656px;width:76px;height:24px;background:#f0f0f0;"></div>
<span class="t" style="left:835.83px;top:660.39px;font-size:11px;color:#333333;">35 016,5347</span>
<div class="b" style="left:902px;top:656px;width:76px;height:24px;background:#f0f0f0;"></div>
<span class="t" style="left:913.83px;top:660.39px;font-size:11px;color:#333333;">32 732,3131</span>
<div class="b" style="left:980px;top:656px;width:73px;height:24px;background:#f0f0f0;"></div>
<span class="t" style="left:994.95px;top:660.39px;font-size:11px;color:#333333;">2 284,2214</span>
<div class="b" style="left:1055px;top:656px;width:73px;height:24px;background:#f0f0f0;"></div>
<span class="t" style="left:1081.58px;top:660.39px;font-size:11px;color:#333333;">6,5233%</span>
<div class="b" style="left:1130px;top:656px;width:76px;height:24px;background:#f0f0f0;"></div>
<span class="t" style="left:1141.83px;top:660.39px;font-size:11px;color:#333333;">35 750,8255</span>
<div class="b" style="left:1208px;top:656px;width:76px;height:24px;background:#f0f0f0;"></div>
<span class="t" style="left:1219.83px;top:660.39px;font-size:11px;color:#333333;">33 147,2506</span>
<div class="b" style="left:1286px;top:656px;width:73px;height:24px;background:#f0f0f0;"></div>
<span class="t" style="left:1300.95px;top:660.39px;font-size:11px;color:#333333;">2 603,5753</span>
<div class="b" style="left:1361px;top:656px;width:98px;height:24px;background:#f0f0f0;"></div>
<span class="t" style="left:1410.12px;top:660.39px;font-size:11px;color:#333333;">654,7538</span>
<div class="b" style="left:1461px;top:656px;width:73px;height:24px;background:#f0f0f0;"></div>
<span class="t" style="left:1482.07px;top:660.39px;font-size:11px;color:#333333;">345:00:00</span>
<div class="b" style="left:1536px;top:656px;width:68px;height:24px;background:#f0f0f0;"></div>
<div class="b" style="left:187px;top:687px;width:1423px;height:15px;background:#f0f0f0;"></div>
<div class="b" style="left:188px;top:687px;width:16px;height:15px;background:#fdfdfd;border:1px solid #b4b4b4;"></div>
<svg class="b" style="left:193px;top:691px;" width="5" height="7" viewBox="0 0 5 7"><path d="M4.4,0.4 L0.6,3.5 L4.4,6.6 Z" fill="#777"/></svg>
<div class="b" style="left:204px;top:687px;width:421px;height:15px;background:#ffffff;border:1px solid #b4b4b4;"></div>
<div class="b" style="left:1593px;top:687px;width:16px;height:15px;background:#fdfdfd;border:1px solid #b4b4b4;"></div>
<svg class="b" style="left:1599.5px;top:691px;" width="5" height="7" viewBox="0 0 5 7"><path d="M0.6,0.4 L4.4,3.5 L0.6,6.6 Z" fill="#777"/></svg>
<div class="b" style="left:1611px;top:182px;width:1216px;height:0px;"></div>
<div class="b" style="left:1611px;top:181px;width:216px;height:522px;background:#f0f0f0;border:1px solid #c4c4c4;"></div>
<div class="b" style="left:1614px;top:184px;width:210px;height:517px;background:#f7f7f7;border:1px solid #d0d0d0;"></div>
<span class="t" style="left:1626.60px;top:201.64px;font-size:12px;color:#2b2b55;font-weight:bold;letter-spacing:2.45px;">..</span>
<svg class="b" style="left:0;top:0" width="1829" height="230" viewBox="0 0 1829 230"><rect x="1646.2" y="199.9" width="9.3" height="11.8" rx="0.8" fill="#2d8fe0"/>
<path d="M1646.2,202.8 h9.3 M1646.2,205.7 h9.3 M1646.2,208.6 h9.3" stroke="#7cc0f2" stroke-width="0.7"/>
<path d="M1652.8,204.9 h7.8 l1.2,1.1 v7.7 h-9 z" fill="#4a556c"/>
<rect x="1654.4" y="205.3" width="5.6" height="3.2" fill="#eef5fd"/>
<rect x="1654.4" y="208.6" width="5.6" height="1.2" fill="#e2463c"/>
<rect x="1655" y="210.9" width="4.6" height="2.8" fill="#c9ced8"/><rect x="1657.8" y="211.2" width="1.1" height="2.2" fill="#4a556c"/><rect x="1686.2" y="199.4" width="10.6" height="12.4" rx="1.2" fill="#f4f5fd" stroke="#8d9bdc" stroke-width="0.9"/>
<path d="M1690,214.4 L1690.9,211.4 L1697.6,205.5 L1699.8,207.6 L1693,213.6 Z" fill="#f0a93c" stroke="#8a5a1c" stroke-width="0.7" stroke-linejoin="round"/>
<path d="M1690,214.4 L1690.7,212.2 L1692.2,213.7 Z" fill="#222"/><rect x="1729.9" y="198.9" width="7.1" height="1" fill="#3d4d8f"/><rect x="1733.2" y="200.9" width="3.8" height="1" fill="#8a96c4"/><rect x="1733.2" y="202.9" width="3.8" height="1" fill="#8a96c4"/><rect x="1729.9" y="204.8" width="7.1" height="1" fill="#3d4d8f"/><rect x="1733.2" y="206.8" width="3.8" height="1" fill="#8a96c4"/><rect x="1733.2" y="208.8" width="3.8" height="1" fill="#8a96c4"/><rect x="1729.9" y="211.0" width="7.1" height="1" fill="#3d4d8f"/><path d="M1725.5,199.2 h2 v2.4 h2.4 v2 h-2.4 v2.4 h-2 v-2.4 h-2.4 v-2 h2.4 z" fill="#b8dc7a" stroke="#4f8f1f" stroke-width="1" stroke-linejoin="round"/><rect x="1767.9" y="198.9" width="7.1" height="1" fill="#3d4d8f"/><rect x="1771.2" y="200.9" width="3.8" height="1" fill="#8a96c4"/><rect x="1771.2" y="202.9" width="3.8" height="1" fill="#8a96c4"/><rect x="1767.9" y="204.8" width="7.1" height="1" fill="#3d4d8f"/><rect x="1771.2" y="206.8" width="3.8" height="1" fill="#8a96c4"/><rect x="1771.2" y="208.8" width="3.8" height="1" fill="#8a96c4"/><rect x="1767.9" y="211.0" width="7.1" height="1" fill="#3d4d8f"/><rect x="1761.3" y="201.4" width="6.4" height="2.4" rx="1" fill="#ee6e68" stroke="#cf3a34" stroke-width="0.9"/><path d="M1799.2,203 L1807,211 M1807,203 L1799.2,211" stroke="#6e6e6e" stroke-width="1"/></svg>
<div class="b" style="left:1615px;top:233px;width:78px;height:23px;background:#f7f7f7;border:1px solid #c4c4c4;border-bottom:none;"></div>
<span class="t" style="left:1621.70px;top:236.39px;font-size:11px;color:#333333;letter-spacing:0.222px;">Точки учёта</span>
<div class="b" style="left:1615px;top:254px;width:208px;height:447px;background:#ffffff;border:1px solid #adadad;border-top:2px solid #adadad;box-shadow:inset 0 0 0 1px #dedede;"></div>
<div class="b" style="left:1693px;top:254px;width:130px;height:2px;background:#b9b9b9;"></div>
<div class="b" style="left:1652px;top:256.5px;width:152px;height:19.5px;background:#e5e5e5;"></div>
<svg class="b" style="left:1619.5px;top:262.8px;" width="11" height="8" viewBox="0 0 11 8"><path d="M1,1.2 L5.4,5.8 L9.8,1.2" fill="none" stroke="#333" stroke-width="1.25"/></svg>
<svg class="b" style="left:1634px;top:259px;" width="14" height="14" viewBox="0 0 14 14"><rect x="0.5" y="0.5" width="13" height="13" fill="#fdfdfd" stroke="#a6a6a6" stroke-width="1"/><path d="M3.2,7.2 L5.8,10 L10.8,3.8" fill="none" stroke="#888" stroke-width="1.2"/></svg>
<span class="t" style="left:1656.10px;top:258.19px;font-size:11px;color:#333333;letter-spacing:-0.120px;">Температура</span>
<svg class="b" style="left:1652px;top:279px;" width="14" height="14" viewBox="0 0 14 14"><rect x="0.5" y="0.5" width="13" height="13" fill="#fdfdfd" stroke="#a6a6a6" stroke-width="1"/><path d="M3.2,7.2 L5.8,10 L10.8,3.8" fill="none" stroke="#888" stroke-width="1.2"/></svg>
<span class="t" style="left:1673.50px;top:278.19px;font-size:11px;color:#333333;">T1</span>
<svg class="b" style="left:1652px;top:299px;" width="14" height="14" viewBox="0 0 14 14"><rect x="0.5" y="0.5" width="13" height="13" fill="#fdfdfd" stroke="#a6a6a6" stroke-width="1"/><path d="M3.2,7.2 L5.8,10 L10.8,3.8" fill="none" stroke="#888" stroke-width="1.2"/></svg>
<span class="t" style="left:1673.50px;top:298.19px;font-size:11px;color:#333333;">T2</span>
<svg class="b" style="left:1652px;top:319px;" width="14" height="14" viewBox="0 0 14 14"><rect x="0.5" y="0.5" width="13" height="13" fill="#fdfdfd" stroke="#a6a6a6" stroke-width="1"/><path d="M3.2,7.2 L5.8,10 L10.8,3.8" fill="none" stroke="#888" stroke-width="1.2"/></svg>
<span class="t" style="left:1673.50px;top:318.19px;font-size:11px;color:#333333;">ΔT</span>
<svg class="b" style="left:1652px;top:339px;" width="14" height="14" viewBox="0 0 14 14"><rect x="0.5" y="0.5" width="13" height="13" fill="#fdfdfd" stroke="#a6a6a6" stroke-width="1"/></svg>
<span class="t" style="left:1673.50px;top:338.19px;font-size:11px;color:#333333;">Тхв</span>
<svg class="b" style="left:1652px;top:359px;" width="14" height="14" viewBox="0 0 14 14"><rect x="0.5" y="0.5" width="13" height="13" fill="#fdfdfd" stroke="#a6a6a6" stroke-width="1"/></svg>
<span class="t" style="left:1673.50px;top:358.19px;font-size:11px;color:#333333;">Твнутр</span>
<svg class="b" style="left:1652px;top:379px;" width="14" height="14" viewBox="0 0 14 14"><rect x="0.5" y="0.5" width="13" height="13" fill="#fdfdfd" stroke="#a6a6a6" stroke-width="1"/></svg>
<span class="t" style="left:1673.50px;top:378.19px;font-size:11px;color:#333333;">Тнв</span>
<svg class="b" style="left:1619.5px;top:402.8px;" width="11" height="8" viewBox="0 0 11 8"><path d="M1,1.2 L5.4,5.8 L9.8,1.2" fill="none" stroke="#333" stroke-width="1.25"/></svg>
<svg class="b" style="left:1634px;top:399px;" width="14" height="14" viewBox="0 0 14 14"><rect x="0.5" y="0.5" width="13" height="13" fill="#fdfdfd" stroke="#a6a6a6" stroke-width="1"/><path d="M3.2,7.2 L5.8,10 L10.8,3.8" fill="none" stroke="#888" stroke-width="1.2"/></svg>
<span class="t" style="left:1656.10px;top:398.19px;font-size:11px;color:#333333;">Давление</span>
<svg class="b" style="left:1652px;top:419px;" width="14" height="14" viewBox="0 0 14 14"><rect x="0.5" y="0.5" width="13" height="13" fill="#fdfdfd" stroke="#a6a6a6" stroke-width="1"/><path d="M3.2,7.2 L5.8,10 L10.8,3.8" fill="none" stroke="#888" stroke-width="1.2"/></svg>
<span class="t" style="left:1673.50px;top:418.19px;font-size:11px;color:#333333;">P1</span>
<svg class="b" style="left:1652px;top:439px;" width="14" height="14" viewBox="0 0 14 14"><rect x="0.5" y="0.5" width="13" height="13" fill="#fdfdfd" stroke="#a6a6a6" stroke-width="1"/><path d="M3.2,7.2 L5.8,10 L10.8,3.8" fill="none" stroke="#888" stroke-width="1.2"/></svg>
<span class="t" style="left:1673.50px;top:438.19px;font-size:11px;color:#333333;">P2</span>
<svg class="b" style="left:1652px;top:459px;" width="14" height="14" viewBox="0 0 14 14"><rect x="0.5" y="0.5" width="13" height="13" fill="#fdfdfd" stroke="#a6a6a6" stroke-width="1"/></svg>
<span class="t" style="left:1673.50px;top:458.19px;font-size:11px;color:#333333;">Рхв</span>
<svg class="b" style="left:1619.5px;top:482.8px;" width="11" height="8" viewBox="0 0 11 8"><path d="M1,1.2 L5.4,5.8 L9.8,1.2" fill="none" stroke="#333" stroke-width="1.25"/></svg>
<svg class="b" style="left:1634px;top:479px;" width="14" height="14" viewBox="0 0 14 14"><rect x="0.5" y="0.5" width="13" height="13" fill="#fdfdfd" stroke="#a6a6a6" stroke-width="1"/><path d="M3.2,7.2 L5.8,10 L10.8,3.8" fill="none" stroke="#888" stroke-width="1.2"/></svg>
<span class="t" style="left:1656.10px;top:478.19px;font-size:11px;color:#333333;">Перепад давления</span>
<svg class="b" style="left:1652px;top:499px;" width="14" height="14" viewBox="0 0 14 14"><rect x="0.5" y="0.5" width="13" height="13" fill="#fdfdfd" stroke="#a6a6a6" stroke-width="1"/><path d="M3.2,7.2 L5.8,10 L10.8,3.8" fill="none" stroke="#888" stroke-width="1.2"/></svg>
<span class="t" style="left:1673.50px;top:498.19px;font-size:11px;color:#333333;">ΔP</span>
<svg class="b" style="left:1619.5px;top:522.8px;" width="11" height="8" viewBox="0 0 11 8"><path d="M1,1.2 L5.4,5.8 L9.8,1.2" fill="none" stroke="#333" stroke-width="1.25"/></svg>
<svg class="b" style="left:1634px;top:519px;" width="14" height="14" viewBox="0 0 14 14"><rect x="0.5" y="0.5" width="13" height="13" fill="#fdfdfd" stroke="#a6a6a6" stroke-width="1"/><path d="M3.2,7.2 L5.8,10 L10.8,3.8" fill="none" stroke="#888" stroke-width="1.2"/></svg>
<span class="t" style="left:1656.10px;top:518.19px;font-size:11px;color:#333333;">Масса</span>
<svg class="b" style="left:1652px;top:539px;" width="14" height="14" viewBox="0 0 14 14"><rect x="0.5" y="0.5" width="13" height="13" fill="#fdfdfd" stroke="#a6a6a6" stroke-width="1"/><path d="M3.2,7.2 L5.8,10 L10.8,3.8" fill="none" stroke="#888" stroke-width="1.2"/></svg>
<span class="t" style="left:1673.50px;top:538.19px;font-size:11px;color:#333333;">M1</span>
<svg class="b" style="left:1652px;top:559px;" width="14" height="14" viewBox="0 0 14 14"><rect x="0.5" y="0.5" width="13" height="13" fill="#fdfdfd" stroke="#a6a6a6" stroke-width="1"/><path d="M3.2,7.2 L5.8,10 L10.8,3.8" fill="none" stroke="#888" stroke-width="1.2"/></svg>
<span class="t" style="left:1673.50px;top:558.19px;font-size:11px;color:#333333;">M2</span>
<svg class="b" style="left:1652px;top:579px;" width="14" height="14" viewBox="0 0 14 14"><rect x="0.5" y="0.5" width="13" height="13" fill="#fdfdfd" stroke="#a6a6a6" stroke-width="1"/><path d="M3.2,7.2 L5.8,10 L10.8,3.8" fill="none" stroke="#888" stroke-width="1.2"/></svg>
<span class="t" style="left:1673.50px;top:578.19px;font-size:11px;color:#333333;">ΔM</span>
<svg class="b" style="left:1652px;top:599px;" width="14" height="14" viewBox="0 0 14 14"><rect x="0.5" y="0.5" width="13" height="13" fill="#fdfdfd" stroke="#a6a6a6" stroke-width="1"/><path d="M3.2,7.2 L5.8,10 L10.8,3.8" fill="none" stroke="#888" stroke-width="1.2"/></svg>
<span class="t" style="left:1673.50px;top:598.19px;font-size:11px;color:#333333;">%M</span>
<svg class="b" style="left:1619.5px;top:622.8px;" width="11" height="8" viewBox="0 0 11 8"><path d="M1,1.2 L5.4,5.8 L9.8,1.2" fill="none" stroke="#333" stroke-width="1.25"/></svg>
<svg class="b" style="left:1634px;top:619px;" width="14" height="14" viewBox="0 0 14 14"><rect x="0.5" y="0.5" width="13" height="13" fill="#fdfdfd" stroke="#a6a6a6" stroke-width="1"/><path d="M3.2,7.2 L5.8,10 L10.8,3.8" fill="none" stroke="#888" stroke-width="1.2"/></svg>
<span class="t" style="left:1656.10px;top:618.19px;font-size:11px;color:#333333;">Объем</span>
<svg class="b" style="left:1652px;top:639px;" width="14" height="14" viewBox="0 0 14 14"><rect x="0.5" y="0.5" width="13" height="13" fill="#fdfdfd" stroke="#a6a6a6" stroke-width="1"/><path d="M3.2,7.2 L5.8,10 L10.8,3.8" fill="none" stroke="#888" stroke-width="1.2"/></svg>
<span class="t" style="left:1673.50px;top:638.19px;font-size:11px;color:#333333;">V1</span>
<svg class="b" style="left:1652px;top:659px;" width="14" height="14" viewBox="0 0 14 14"><rect x="0.5" y="0.5" width="13" height="13" fill="#fdfdfd" stroke="#a6a6a6" stroke-width="1"/><path d="M3.2,7.2 L5.8,10 L10.8,3.8" fill="none" stroke="#888" stroke-width="1.2"/></svg>
<span class="t" style="left:1673.50px;top:658.19px;font-size:11px;color:#333333;">V2</span>
<svg class="b" style="left:1652px;top:679px;" width="14" height="14" viewBox="0 0 14 14"><rect x="0.5" y="0.5" width="13" height="13" fill="#fdfdfd" stroke="#a6a6a6" stroke-width="1"/><path d="M3.2,7.2 L5.8,10 L10.8,3.8" fill="none" stroke="#888" stroke-width="1.2"/></svg>
<span class="t" style="left:1673.50px;top:678.19px;font-size:11px;color:#333333;">ΔV</span>
<div class="b" style="left:1805px;top:256px;width:16px;height:444px;background:#f0f0f0;"></div>
<div class="b" style="left:1805px;top:257px;width:15px;height:16px;background:#fdfdfd;border:1px solid #a9a9a9;"></div>
<svg class="b" style="left:1808.9px;top:262px;" width="7" height="5" viewBox="0 0 7 5"><path d="M0.2,4.2 L3.5,0.4 L6.8,4.2 Z" fill="#7a7a7a"/></svg>
<div class="b" style="left:1805px;top:273px;width:15px;height:214px;background:#ffffff;border:1px solid #a9a9a9;"></div>
<div class="b" style="left:1805px;top:682px;width:15px;height:16px;background:#fdfdfd;border:1px solid #a9a9a9;"></div>
<svg class="b" style="left:1808.9px;top:688px;" width="7" height="5" viewBox="0 0 7 5"><path d="M0.2,0.4 L3.5,4.2 L6.8,0.4 Z" fill="#7a7a7a"/></svg>
<div class="b" style="left:186px;top:703px;width:1425px;height:1px;background:#b2b2b2;"></div>
<div class="b" style="left:1px;top:704px;width:1827px;height:1px;background:#c6c6c6;"></div>
<div class="b" style="left:1px;top:705px;width:1827px;height:1px;background:#f8f8f8;"></div>
<div class="b" style="left:1px;top:706px;width:1827px;height:22px;background:#f0f0f0;"></div>
<span class="t" style="left:25.90px;top:709.39px;font-size:11px;color:#333333;letter-spacing:-0.437px;">10272</span>
<svg class="b" style="left:75px;top:709px;" width="9" height="16" viewBox="0 0 9 16"><rect x="0.5" y="0.5" width="7.4" height="15" rx="0.8" fill="#cbd9e4" stroke="#8296aa" stroke-width="0.9"/><rect x="3.5" y="2.6" width="1.5" height="10" fill="#d9482a"/><circle cx="4.2" cy="12.8" r="1.7" fill="#d9482a"/></svg>
<span class="t" style="left:91.50px;top:709.39px;font-size:11px;color:#333333;letter-spacing:-0.196px;">ФКУ ИК-12 ГУФСИН</span>
<span class="t" style="left:194.50px;top:709.39px;font-size:11px;color:#333333;letter-spacing:-0.051px;">России по Свердловской области - Теплоснабжение [0] / 622014,</span>
<span class="t" style="left:528.50px;top:709.39px;font-size:11px;color:#333333;letter-spacing:0.074px;">Свердловская область, г. Нижний Тагил, станция Сан-Донато</span>
<span class="t" style="left:863.00px;top:709.39px;font-size:11px;color:#333333;letter-spacing:0.209px;">РД=1, РЧ=0</span>
<span class="t" style="left:946.00px;top:709.39px;font-size:11px;color:#333333;letter-spacing:-0.091px;">СПТ943 #32273</span>
<div class="b" style="left:936px;top:708px;width:1px;height:17px;background:#d0d0d0;"></div>
<div class="b" style="left:1035px;top:708px;width:1px;height:17px;background:#d0d0d0;"></div>
<div class="b" style="left:1579px;top:708px;width:1px;height:17px;background:#d0d0d0;"></div>
<span class="t" style="left:1250.60px;top:709.39px;font-size:11px;color:#333333;letter-spacing:0.132px;">Служб опроса: 1; портов: 241, действует: 241, свободно: 237</span>
<span class="t" style="left:1589.50px;top:709.39px;font-size:11px;color:#333333;letter-spacing:0.266px;">http://10.104.0.60:10010/ | 13:25 (12 дек)</span>
<svg class="b" style="left:1230px;top:708px;" width="16" height="18" viewBox="0 0 16 18"><rect x="5.1" y="1.2" width="5.7" height="3.2" rx="0.8" fill="#fbd64a" stroke="#e89a1e" stroke-width="0.8"/>
<rect x="2.8" y="2.2" width="1.1" height="2.2" fill="#e89a1e"/><rect x="12" y="2.2" width="1.1" height="2.2" fill="#e89a1e"/>
<rect x="1" y="4.1" width="13.9" height="1" fill="#7f8790"/>
<path d="M2.4,5.1 h11.2 v3.4 l-2.6,1.8 h-6 l-2.6,-1.8 z" fill="#e4e4e4" stroke="#8a8a8a" stroke-width="0.9"/>
<rect x="5.2" y="5.6" width="5.6" height="3.6" fill="#f0f0f0" stroke="#9a9a9a" stroke-width="0.6"/><rect x="6" y="6.4" width="4" height="0.9" fill="#9a9a9a"/>
<path d="M6.2,10.3 h3.6 l-0.8,3.6 h-2 z" fill="#e8e8e8" stroke="#8a8a8a" stroke-width="0.8"/>
<rect x="7.4" y="13.9" width="1.3" height="2.8" fill="#4a4a4a"/></svg>
<svg class="b" style="left:1812px;top:713px;" width="12" height="12" viewBox="0 0 12 12"><g fill="#b0b0b0"><rect x="9" y="9" width="2" height="2"/><rect x="5" y="9" width="2" height="2"/><rect x="9" y="5" width="2" height="2"/><rect x="1" y="9" width="2" height="2"/><rect x="5" y="5" width="2" height="2"/><rect x="9" y="1" width="2" height="2"/></g></svg>
<div class="b" style="left:0px;top:36px;width:1px;height:693px;background:#106ebe;"></div>
<div class="b" style="left:1828px;top:36px;width:1px;height:693px;background:#106ebe;"></div>
<div class="b" style="left:0px;top:728px;width:1829px;height:1px;background:#106ebe;"></div>
</body></html>
